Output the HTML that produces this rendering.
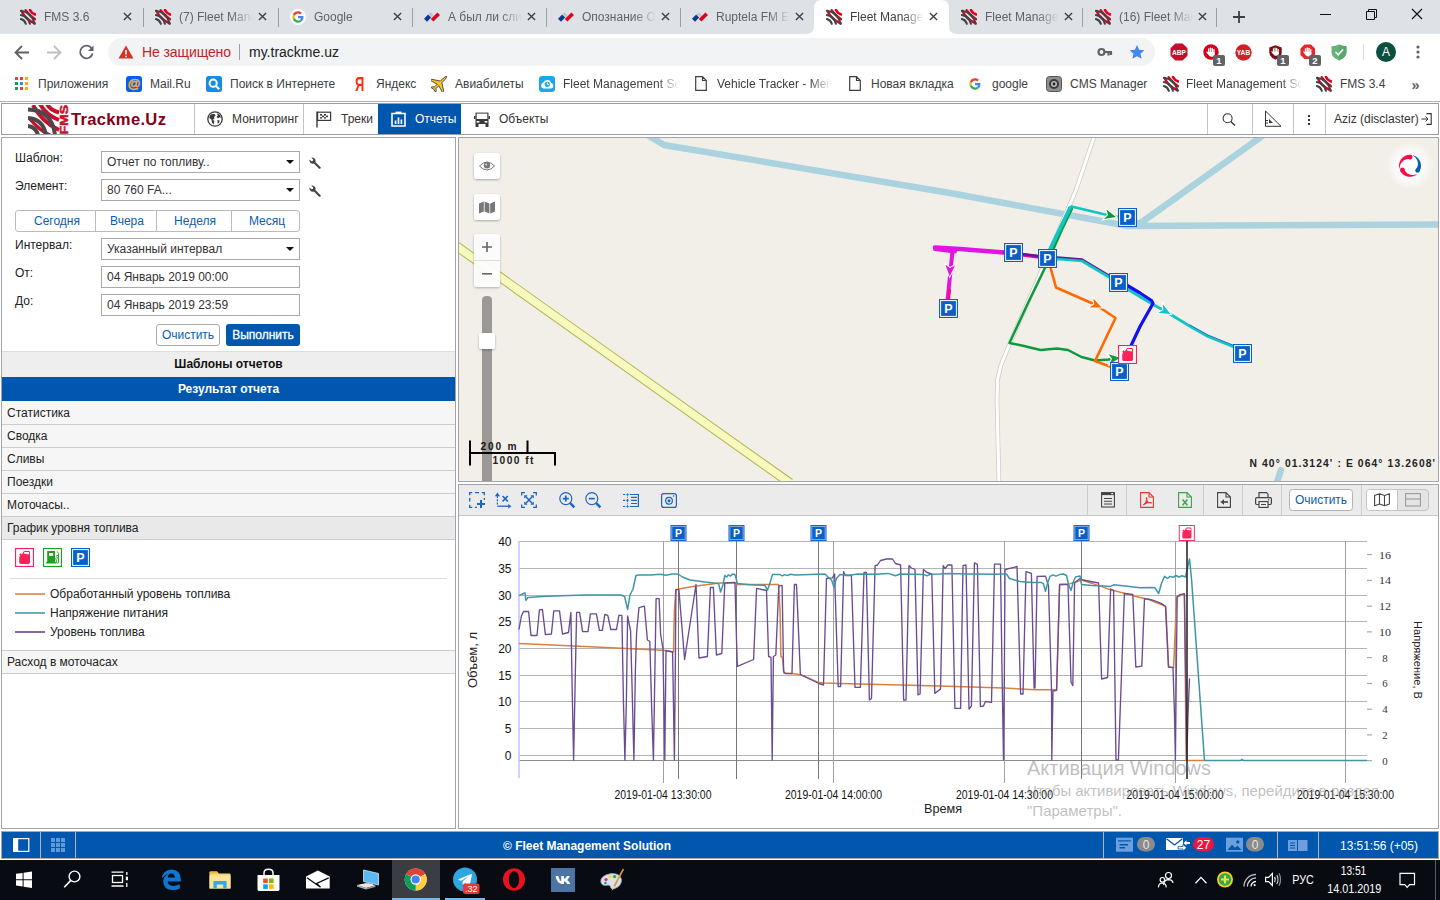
<!DOCTYPE html>
<html><head><meta charset="utf-8"><title>Fleet Management</title>
<style>
*{box-sizing:border-box;margin:0;padding:0}
html,body{width:1440px;height:900px;overflow:hidden;background:#fff;font-family:"Liberation Sans",sans-serif;font-size:12px;color:#222}
.abs{position:absolute}
#tabbar{position:absolute;left:0;top:0;width:1440px;height:34px;background:#dee1e6}
#toolbar{position:absolute;left:0;top:34px;width:1440px;height:36px;background:#fff}
#bookmarks{position:absolute;left:0;top:70px;width:1440px;height:32px;background:#fff;border-bottom:1px solid #b4b2b4}
.tab{position:absolute;top:0;height:34px;font-size:12.5px;color:#5f6368;white-space:nowrap}
.tab .t{position:absolute;left:36px;top:9px;width:76px;overflow:hidden;-webkit-mask-image:linear-gradient(90deg,#000 75%,transparent);}
.tab .x{position:absolute;left:114px;top:11px;width:11px;height:11px}
.tab .ico{position:absolute;left:10px;top:8px;width:18px;height:18px}
.tsep{position:absolute;top:8px;width:1px;height:19px;background:#9aa0a6}
.bm{position:absolute;top:7px;height:18px;font-size:12px;color:#3c4043;white-space:nowrap}
#app{position:absolute;left:0;top:101px;width:1440px;height:759px}
#hdr{position:absolute;left:1px;top:2px;width:1438px;height:32px;border:1px solid #9c9ea5;background:#fff}
.nav{position:absolute;top:0;height:30px;border-left:1px solid #c4c4c4;font-size:12.5px;color:#333;white-space:nowrap}
#left{position:absolute;left:1px;top:36px;width:455px;height:692px;border:1px solid #a2a4a9;background:#fff}
#map{position:absolute;left:458px;top:36px;width:981px;height:345px;border:1px solid #a2a4a9;background:#f2efe9;overflow:hidden}
#chart{position:absolute;left:458px;top:383px;width:981px;height:345px;border:1px solid #a2a4a9;background:#fff;overflow:hidden}
#foot{position:absolute;left:1px;top:730px;width:1438px;height:28px;background:#0057ad;border:1px solid #a8a8a8}
#taskbar{position:absolute;left:0;top:860px;width:1440px;height:40px;background:#080b11}
.tt{position:absolute;top:9px;width:77px;height:16px;line-height:16px;overflow:hidden;white-space:nowrap;font-size:12px;-webkit-mask-image:linear-gradient(90deg,#000 68%,transparent 96%)}
</style></head><body>
<div id="tabbar"><svg style="position:absolute;left:806px;top:0" width="152" height="34" viewBox="0 0 152 34"><path d="M0 34 Q8 34 8 26 L8 8 Q8 0 16 0 L135 0 Q143 0 143 8 L143 26 Q143 34 151 34 Z" fill="#fff"/></svg>
<svg viewBox="0 0 16 16" width="16" height="16" style="position:absolute;left:20px;top:9px"><g fill="none" stroke-linecap="round"><path d="M10 1 Q11.6 4.4 15.2 5.4" stroke="#e2001a" stroke-width="2.6"/><path d="M5.6 1.2 Q9.4 7 15.2 10.2" stroke="#e2001a" stroke-width="2.3"/><path d="M1.6 2 Q4.6 9.6 14.6 14.4" stroke="#e2001a" stroke-width="2.3"/><path d="M0.9 1.8 Q12 3.2 14.6 14.8" stroke="#3d4548" stroke-width="2.1"/><path d="M0.9 6 Q8 7.2 9.9 14.8" stroke="#3d4548" stroke-width="2.1"/><path d="M0.9 10.1 Q4.6 11 5.8 14.8" stroke="#3d4548" stroke-width="2.1"/></g></svg>
<div class="tt" style="left:44px;color:#5f6368">FMS 3.6</div>
<svg viewBox="0 0 10 10" width="9" height="9" style="position:absolute;left:123px;top:12px"><path d="M1 1 L9 9 M9 1 L1 9" stroke="#3c4043" stroke-width="1.5" fill="none"/></svg>
<svg viewBox="0 0 16 16" width="16" height="16" style="position:absolute;left:155px;top:9px"><g fill="none" stroke-linecap="round"><path d="M10 1 Q11.6 4.4 15.2 5.4" stroke="#e2001a" stroke-width="2.6"/><path d="M5.6 1.2 Q9.4 7 15.2 10.2" stroke="#e2001a" stroke-width="2.3"/><path d="M1.6 2 Q4.6 9.6 14.6 14.4" stroke="#e2001a" stroke-width="2.3"/><path d="M0.9 1.8 Q12 3.2 14.6 14.8" stroke="#3d4548" stroke-width="2.1"/><path d="M0.9 6 Q8 7.2 9.9 14.8" stroke="#3d4548" stroke-width="2.1"/><path d="M0.9 10.1 Q4.6 11 5.8 14.8" stroke="#3d4548" stroke-width="2.1"/></g></svg>
<div class="tt" style="left:179px;color:#5f6368">(7) Fleet Management</div>
<svg viewBox="0 0 10 10" width="9" height="9" style="position:absolute;left:258px;top:12px"><path d="M1 1 L9 9 M9 1 L1 9" stroke="#3c4043" stroke-width="1.5" fill="none"/></svg>
<svg viewBox="0 0 48 48" width="16" height="16" style="position:absolute;left:290px;top:9px"><circle cx="24" cy="24" r="24" fill="#fff"/><g transform="translate(7 7) scale(0.71)"><path fill="#EA4335" d="M24 9.5c3.54 0 6.71 1.22 9.21 3.6l6.85-6.85C35.9 2.38 30.47 0 24 0 14.62 0 6.51 5.38 2.56 13.22l7.98 6.19C12.43 13.72 17.74 9.5 24 9.5z"/><path fill="#4285F4" d="M46.98 24.55c0-1.57-.15-3.09-.38-4.55H24v9.02h12.94c-.58 2.96-2.26 5.48-4.78 7.18l7.73 6c4.51-4.18 7.09-10.36 7.09-17.65z"/><path fill="#FBBC05" d="M10.53 28.59c-.48-1.45-.76-2.99-.76-4.59s.27-3.14.76-4.59l-7.98-6.19C.92 16.46 0 20.12 0 24c0 3.88.92 7.54 2.56 10.78l7.97-6.19z"/><path fill="#34A853" d="M24 48c6.48 0 11.93-2.13 15.89-5.81l-7.73-6c-2.15 1.45-4.92 2.3-8.16 2.3-6.26 0-11.57-4.22-13.47-9.91l-7.98 6.19C6.51 42.62 14.62 48 24 48z"/></g></svg>
<div class="tt" style="left:314px;color:#5f6368">Google</div>
<svg viewBox="0 0 10 10" width="9" height="9" style="position:absolute;left:393px;top:12px"><path d="M1 1 L9 9 M9 1 L1 9" stroke="#3c4043" stroke-width="1.5" fill="none"/></svg>
<svg viewBox="0 0 16 16" width="16" height="16" style="position:absolute;left:424px;top:9px"><path d="M0 9.8 L4.2 5.6 L7.2 8.6 L3 12.8Z" fill="#0b3b8c"/><path d="M4.2 5.6 L6.6 3.2 L9.6 6.2 L7.2 8.6Z" fill="#b9c5d8"/><path d="M6.8 10 L13.4 3.4 L16 6 L9.4 12.6Z" fill="#e2001a"/></svg>
<div class="tt" style="left:448px;color:#5f6368">А был ли слив</div>
<svg viewBox="0 0 10 10" width="9" height="9" style="position:absolute;left:527px;top:12px"><path d="M1 1 L9 9 M9 1 L1 9" stroke="#3c4043" stroke-width="1.5" fill="none"/></svg>
<svg viewBox="0 0 16 16" width="16" height="16" style="position:absolute;left:558px;top:9px"><path d="M0 9.8 L4.2 5.6 L7.2 8.6 L3 12.8Z" fill="#0b3b8c"/><path d="M4.2 5.6 L6.6 3.2 L9.6 6.2 L7.2 8.6Z" fill="#b9c5d8"/><path d="M6.8 10 L13.4 3.4 L16 6 L9.4 12.6Z" fill="#e2001a"/></svg>
<div class="tt" style="left:582px;color:#5f6368">Опознание О</div>
<svg viewBox="0 0 10 10" width="9" height="9" style="position:absolute;left:661px;top:12px"><path d="M1 1 L9 9 M9 1 L1 9" stroke="#3c4043" stroke-width="1.5" fill="none"/></svg>
<svg viewBox="0 0 16 16" width="16" height="16" style="position:absolute;left:692px;top:9px"><path d="M0 9.8 L4.2 5.6 L7.2 8.6 L3 12.8Z" fill="#0b3b8c"/><path d="M4.2 5.6 L6.6 3.2 L9.6 6.2 L7.2 8.6Z" fill="#b9c5d8"/><path d="M6.8 10 L13.4 3.4 L16 6 L9.4 12.6Z" fill="#e2001a"/></svg>
<div class="tt" style="left:716px;color:#5f6368">Ruptela FM Express</div>
<svg viewBox="0 0 10 10" width="9" height="9" style="position:absolute;left:795px;top:12px"><path d="M1 1 L9 9 M9 1 L1 9" stroke="#3c4043" stroke-width="1.5" fill="none"/></svg>
<svg viewBox="0 0 16 16" width="16" height="16" style="position:absolute;left:826px;top:9px"><g fill="none" stroke-linecap="round"><path d="M10 1 Q11.6 4.4 15.2 5.4" stroke="#e2001a" stroke-width="2.6"/><path d="M5.6 1.2 Q9.4 7 15.2 10.2" stroke="#e2001a" stroke-width="2.3"/><path d="M1.6 2 Q4.6 9.6 14.6 14.4" stroke="#e2001a" stroke-width="2.3"/><path d="M0.9 1.8 Q12 3.2 14.6 14.8" stroke="#3d4548" stroke-width="2.1"/><path d="M0.9 6 Q8 7.2 9.9 14.8" stroke="#3d4548" stroke-width="2.1"/><path d="M0.9 10.1 Q4.6 11 5.8 14.8" stroke="#3d4548" stroke-width="2.1"/></g></svg>
<div class="tt" style="left:850px;color:#3c4043">Fleet Management</div>
<svg viewBox="0 0 10 10" width="9" height="9" style="position:absolute;left:929px;top:12px"><path d="M1 1 L9 9 M9 1 L1 9" stroke="#3c4043" stroke-width="1.5" fill="none"/></svg>
<svg viewBox="0 0 16 16" width="16" height="16" style="position:absolute;left:961px;top:9px"><g fill="none" stroke-linecap="round"><path d="M10 1 Q11.6 4.4 15.2 5.4" stroke="#e2001a" stroke-width="2.6"/><path d="M5.6 1.2 Q9.4 7 15.2 10.2" stroke="#e2001a" stroke-width="2.3"/><path d="M1.6 2 Q4.6 9.6 14.6 14.4" stroke="#e2001a" stroke-width="2.3"/><path d="M0.9 1.8 Q12 3.2 14.6 14.8" stroke="#3d4548" stroke-width="2.1"/><path d="M0.9 6 Q8 7.2 9.9 14.8" stroke="#3d4548" stroke-width="2.1"/><path d="M0.9 10.1 Q4.6 11 5.8 14.8" stroke="#3d4548" stroke-width="2.1"/></g></svg>
<div class="tt" style="left:985px;color:#5f6368">Fleet Management</div>
<svg viewBox="0 0 10 10" width="9" height="9" style="position:absolute;left:1064px;top:12px"><path d="M1 1 L9 9 M9 1 L1 9" stroke="#3c4043" stroke-width="1.5" fill="none"/></svg>
<svg viewBox="0 0 16 16" width="16" height="16" style="position:absolute;left:1095px;top:9px"><g fill="none" stroke-linecap="round"><path d="M10 1 Q11.6 4.4 15.2 5.4" stroke="#e2001a" stroke-width="2.6"/><path d="M5.6 1.2 Q9.4 7 15.2 10.2" stroke="#e2001a" stroke-width="2.3"/><path d="M1.6 2 Q4.6 9.6 14.6 14.4" stroke="#e2001a" stroke-width="2.3"/><path d="M0.9 1.8 Q12 3.2 14.6 14.8" stroke="#3d4548" stroke-width="2.1"/><path d="M0.9 6 Q8 7.2 9.9 14.8" stroke="#3d4548" stroke-width="2.1"/><path d="M0.9 10.1 Q4.6 11 5.8 14.8" stroke="#3d4548" stroke-width="2.1"/></g></svg>
<div class="tt" style="left:1119px;color:#5f6368">(16) Fleet Management</div>
<svg viewBox="0 0 10 10" width="9" height="9" style="position:absolute;left:1198px;top:12px"><path d="M1 1 L9 9 M9 1 L1 9" stroke="#3c4043" stroke-width="1.5" fill="none"/></svg>
<div class="tsep" style="left:143px"></div>
<div class="tsep" style="left:278px"></div>
<div class="tsep" style="left:412px"></div>
<div class="tsep" style="left:546px"></div>
<div class="tsep" style="left:680px"></div>
<div class="tsep" style="left:1082px"></div>
<div class="tsep" style="left:1216px"></div>
<svg style="position:absolute;left:1232px;top:10px" width="14" height="14" viewBox="0 0 14 14"><path d="M7 1 V13 M1 7 H13" stroke="#3c4043" stroke-width="1.8" fill="none"/></svg>
<svg style="position:absolute;left:1300px;top:0" width="140" height="30" viewBox="0 0 140 30"><g stroke="#111" stroke-width="1" fill="none"><path d="M20 14.5 H31"/><path d="M66.5 11.5 h8 v8 h-8 z M68.5 11.5 v-2 h8 v8 h-2"/><path d="M112 9 L122 19 M122 9 L112 19" stroke-width="1.2"/></g></svg></div>
<div id="toolbar"><svg style="position:absolute;left:0;top:0" width="108" height="36" viewBox="0 0 108 36"><g fill="none" stroke-width="1.8"><path d="M29 18.5 H16 M22 12 L15.5 18.5 L22 25" stroke="#5f6368"/><path d="M47 18.5 H60 M54 12 L60.5 18.5 L54 25" stroke="#bdc1c6"/><path d="M91.5 14.2 A6.3 6.3 0 1 0 92.6 19.5" stroke="#5f6368"/></g><path d="M93.5 11.5 V17 H88 Z" fill="#5f6368"/></svg>
<div style="position:absolute;left:108px;top:4px;width:1047px;height:28px;border-radius:14px;background:#f1f3f4"></div>
<svg style="position:absolute;left:118px;top:11px" width="16" height="14" viewBox="0 0 16 14"><path d="M8 0.5 L15.5 13.5 H0.5 Z" fill="#d93025"/><path d="M8 5 V9.5 M8 10.8 V12.2" stroke="#fff" stroke-width="1.6"/></svg>
<div style="position:absolute;left:142px;top:9px;font-size:14px;line-height:18px;color:#c5221f;white-space:nowrap;letter-spacing:-0.1px">Не защищено</div>
<div style="position:absolute;left:239px;top:10px;width:1px;height:16px;background:#9aa0a6"></div>
<div style="position:absolute;left:249px;top:9px;font-size:14px;line-height:18px;color:#202124;white-space:nowrap">my.trackme.uz</div>
<svg style="position:absolute;left:1097px;top:12px" width="16" height="12" viewBox="0 0 16 12"><circle cx="4.5" cy="6" r="3" fill="none" stroke="#5f6368" stroke-width="2.2"/><path d="M7 6 H15 M11.5 6 V9.5 M14 6 V9" stroke="#5f6368" stroke-width="2.2" fill="none"/></svg>
<svg style="position:absolute;left:1129px;top:10px" width="16" height="16" viewBox="0 0 24 24"><path d="M12 1.5 L15.2 8.6 L23 9.4 L17.2 14.6 L18.9 22.3 L12 18.3 L5.1 22.3 L6.8 14.6 L1 9.4 L8.8 8.6 Z" fill="#4285f4"/></svg>
<svg style="position:absolute;left:1170px;top:9px" width="18" height="18" viewBox="0 0 18 18"><path d="M5.3 0.5 H12.7 L17.5 5.3 V12.7 L12.7 17.5 H5.3 L0.5 12.7 V5.3 Z" fill="#c70d2c"/><text x="9" y="11.6" font-family="Liberation Sans" font-weight="bold" font-size="6.6" fill="#fff" text-anchor="middle">ABP</text></svg>
<svg style="position:absolute;left:1203px;top:9.5px" width="16" height="16" viewBox="0 0 17 17"><circle cx="8.5" cy="8.5" r="8.2" fill="#d0021b"/><g fill="#fff"><rect x="5.3" y="4.6" width="1.5" height="6" rx="0.75"/><rect x="7.2" y="3.6" width="1.5" height="7" rx="0.75"/><rect x="9.1" y="4" width="1.5" height="7" rx="0.75"/><rect x="11" y="5.4" width="1.4" height="6" rx="0.7"/><path d="M5.3 8.6 H12.4 V10.6 Q12.4 13.6 9.2 13.6 Q6.8 13.6 5.8 11.8 L3.6 8.9 Q3.4 8.2 4.1 8 Q4.7 7.9 5.3 8.9Z"/></g></svg>
<div style="position:absolute;left:1213px;top:20.5px;width:12px;height:11.5px;border-radius:2px;background:#5f6368;color:#fff;font-size:9.5px;font-weight:bold;line-height:11.5px;text-align:center">1</div>
<svg style="position:absolute;left:1234.5px;top:9.5px" width="17" height="17" viewBox="0 0 17 17"><circle cx="8.5" cy="8.5" r="8.2" fill="#cf2228"/><text x="8.5" y="11" font-family="Liberation Sans" font-weight="bold" font-size="6.6" fill="#fff" text-anchor="middle">YAB</text></svg>
<svg style="position:absolute;left:1268.5px;top:10.5px" width="13" height="15" viewBox="0 0 13 15"><path d="M6.5 0.3 L12.7 2.4 V7.4 Q12.7 12 6.5 14.7 Q0.3 12 0.3 7.4 V2.4 Z" fill="#7a0d14"/><g transform="translate(-0.6 -0.6) scale(0.84)"><g fill="#fff"><rect x="5.3" y="4.6" width="1.5" height="6" rx="0.75"/><rect x="7.2" y="3.6" width="1.5" height="7" rx="0.75"/><rect x="9.1" y="4" width="1.5" height="7" rx="0.75"/><rect x="11" y="5.4" width="1.4" height="6" rx="0.7"/><path d="M5.3 8.6 H12.4 V10.6 Q12.4 13.6 9.2 13.6 Q6.8 13.6 5.8 11.8 L3.6 8.9 Q3.4 8.2 4.1 8 Q4.7 7.9 5.3 8.9Z"/></g></g></svg>
<div style="position:absolute;left:1277px;top:20.5px;width:12px;height:11.5px;border-radius:2px;background:#5f6368;color:#fff;font-size:9.5px;font-weight:bold;line-height:11.5px;text-align:center">1</div>
<svg style="position:absolute;left:1299.5px;top:9.5px" width="15.5" height="15.5" viewBox="0 0 17 17"><path d="M5 0.5 H12 L16.5 5 V12 L12 16.5 H5 L0.5 12 V5 Z" fill="#e8252a"/><g fill="#fff"><rect x="5.3" y="4.6" width="1.5" height="6" rx="0.75"/><rect x="7.2" y="3.6" width="1.5" height="7" rx="0.75"/><rect x="9.1" y="4" width="1.5" height="7" rx="0.75"/><rect x="11" y="5.4" width="1.4" height="6" rx="0.7"/><path d="M5.3 8.6 H12.4 V10.6 Q12.4 13.6 9.2 13.6 Q6.8 13.6 5.8 11.8 L3.6 8.9 Q3.4 8.2 4.1 8 Q4.7 7.9 5.3 8.9Z"/></g></svg>
<div style="position:absolute;left:1309px;top:20.5px;width:12px;height:11.5px;border-radius:2px;background:#5f6368;color:#fff;font-size:9.5px;font-weight:bold;line-height:11.5px;text-align:center">2</div>
<svg style="position:absolute;left:1331px;top:9.5px" width="16" height="17" viewBox="0 0 16 17"><path d="M8 0.5 Q11 2.2 15.5 2.2 V8 Q15.5 13.5 8 16.5 Q0.5 13.5 0.5 8 V2.2 Q5 2.2 8 0.5Z" fill="#67b279"/><path d="M8 0.5 Q11 2.2 15.5 2.2 V8 Q15.5 13.5 8 16.5Z" fill="#5aa86c"/><path d="M4.5 8 L7.2 10.8 L12 5.5" stroke="#fff" stroke-width="1.6" fill="none"/></svg>
<div style="position:absolute;left:1363px;top:10px;width:1px;height:16px;background:#dadce0"></div>
<div style="position:absolute;left:1376px;top:8px;width:20px;height:20px;border-radius:10px;background:#0b4f3e;color:#fff;font-size:12px;line-height:20px;text-align:center">A</div>
<svg style="position:absolute;left:1415px;top:10px" width="6" height="16" viewBox="0 0 6 16"><circle cx="3" cy="3" r="1.6" fill="#5f6368"/><circle cx="3" cy="8" r="1.6" fill="#5f6368"/><circle cx="3" cy="13" r="1.6" fill="#5f6368"/></svg></div>
<div id="bookmarks"><svg style="position:absolute;left:15px;top:7px" width="13" height="13" viewBox="0 0 13 13"><rect x="0" y="0" width="3" height="3" fill="#db4437"/><rect x="5" y="0" width="3" height="3" fill="#db4437"/><rect x="10" y="0" width="3" height="3" fill="#f4b400"/><rect x="0" y="5" width="3" height="3" fill="#0f9d58"/><rect x="5" y="5" width="3" height="3" fill="#4285f4"/><rect x="10" y="5" width="3" height="3" fill="#f4b400"/><rect x="0" y="10" width="3" height="3" fill="#0f9d58"/><rect x="5" y="10" width="3" height="3" fill="#db4437"/><rect x="10" y="10" width="3" height="3" fill="#f4b400"/></svg>
<div class="bm" style="left:38px;">Приложения</div>
<div style="position:absolute;left:126px;top:6px;width:16px;height:16px;border-radius:3px;background:#005ff9;color:#ffb020;font-size:13px;font-weight:bold;line-height:15px;text-align:center;-webkit-text-stroke:0.4px #ffb020">@</div>
<div class="bm" style="left:150px;">Mail.Ru</div>
<svg style="position:absolute;left:206px;top:6px" width="16" height="16" viewBox="0 0 16 16"><rect width="16" height="16" rx="2.5" fill="#168de2"/><circle cx="7.2" cy="7.2" r="3.6" fill="none" stroke="#fff" stroke-width="2"/><path d="M9.8 9.8 L13.2 13.2" stroke="#fff" stroke-width="2.2"/></svg>
<div class="bm" style="left:230px;">Поиск в Интернете</div>
<div style="position:absolute;left:354.5px;top:3.5px;font-size:19.5px;line-height:20px;color:#ff2a10;font-weight:bold;transform:scaleX(0.66);transform-origin:left">Я</div>
<div class="bm" style="left:376px;">Яндекс</div>
<svg style="position:absolute;left:431px;top:5px" width="17" height="17" viewBox="0 0 17 17"><g transform="rotate(45 8.5 8.5)"><path d="M8.5 -1.5 Q9.6 -0.8 9.6 2 V6.2 L17 11 V12.8 L9.6 10.6 V14.6 L11.6 16.2 V17.4 L8.5 16.6 L5.4 17.4 V16.2 L7.4 14.6 V10.6 L0 12.8 V11 L7.4 6.2 V2 Q7.4 -0.8 8.5 -1.5Z" fill="#f7c51e" stroke="#33383d" stroke-width="0.8"/></g></svg>
<div class="bm" style="left:455px;">Авиабилеты</div>
<svg style="position:absolute;left:539px;top:6px" width="16" height="16" viewBox="0 0 16 16"><rect width="16" height="16" rx="3" fill="#1ea7e6"/><path d="M4.6 12.6 H11.8 a2.7 2.7 0 0 0 .6-5.3 A4.3 4.3 0 0 0 4.3 6.6 A3.1 3.1 0 0 0 4.6 12.6Z" fill="#fff"/><circle cx="8.3" cy="8.3" r="2.6" fill="#1ea7e6"/><path d="M8.3 6.6 V8.5 H9.8" stroke="#fff" stroke-width="1" fill="none"/></svg>
<div class="bm" style="left:563px;width:116px;overflow:hidden;-webkit-mask-image:linear-gradient(90deg,#000 82%,transparent 100%);">Fleet Management Sc</div>
<svg style="position:absolute;left:695px;top:6px" width="12" height="15" viewBox="0 0 12 15"><path d="M0.7 0.7 H7.5 L11.3 4.5 V14.3 H0.7 Z M7.5 0.7 V4.5 H11.3" fill="#fff" stroke="#3c4043" stroke-width="1.2"/></svg>
<div class="bm" style="left:717px;width:114px;overflow:hidden;-webkit-mask-image:linear-gradient(90deg,#000 82%,transparent 100%);">Vehicle Tracker - Meit</div>
<svg style="position:absolute;left:849px;top:6px" width="12" height="15" viewBox="0 0 12 15"><path d="M0.7 0.7 H7.5 L11.3 4.5 V14.3 H0.7 Z M7.5 0.7 V4.5 H11.3" fill="#fff" stroke="#3c4043" stroke-width="1.2"/></svg>
<div class="bm" style="left:871px;">Новая вкладка</div>
<svg viewBox="0 0 48 48" width="16" height="16" style="position:absolute;left:967px;top:6px"><g transform="translate(7 7) scale(0.71)"><path fill="#EA4335" d="M24 9.5c3.54 0 6.71 1.22 9.21 3.6l6.85-6.85C35.9 2.38 30.47 0 24 0 14.62 0 6.51 5.38 2.56 13.22l7.98 6.19C12.43 13.72 17.74 9.5 24 9.5z"/><path fill="#4285F4" d="M46.98 24.55c0-1.57-.15-3.09-.38-4.55H24v9.02h12.94c-.58 2.96-2.26 5.48-4.78 7.18l7.73 6c4.51-4.18 7.09-10.36 7.09-17.65z"/><path fill="#FBBC05" d="M10.53 28.59c-.48-1.45-.76-2.99-.76-4.59s.27-3.14.76-4.59l-7.98-6.19C.92 16.46 0 20.12 0 24c0 3.88.92 7.54 2.56 10.78l7.97-6.19z"/><path fill="#34A853" d="M24 48c6.48 0 11.93-2.13 15.89-5.81l-7.73-6c-2.15 1.45-4.92 2.3-8.16 2.3-6.26 0-11.57-4.22-13.47-9.91l-7.98 6.19C6.51 42.62 14.62 48 24 48z"/></g></svg>
<div class="bm" style="left:992px;">google</div>
<svg style="position:absolute;left:1046px;top:6px" width="16" height="16" viewBox="0 0 16 16"><rect x="0.5" y="0.5" width="15" height="15" rx="3" fill="#8e8e8e" stroke="#555"/><circle cx="8" cy="8" r="5" fill="#3a3a3a"/><circle cx="8" cy="8" r="3" fill="#bbb"/><circle cx="8" cy="8" r="1.4" fill="#222"/></svg>
<div class="bm" style="left:1070px;">CMS Manager</div>
<svg viewBox="0 0 16 16" width="16" height="16" style="position:absolute;left:1163px;top:6px"><g fill="none" stroke-linecap="round"><path d="M10 1 Q11.6 4.4 15.2 5.4" stroke="#e2001a" stroke-width="2.6"/><path d="M5.6 1.2 Q9.4 7 15.2 10.2" stroke="#e2001a" stroke-width="2.3"/><path d="M1.6 2 Q4.6 9.6 14.6 14.4" stroke="#e2001a" stroke-width="2.3"/><path d="M0.9 1.8 Q12 3.2 14.6 14.8" stroke="#3d4548" stroke-width="2.1"/><path d="M0.9 6 Q8 7.2 9.9 14.8" stroke="#3d4548" stroke-width="2.1"/><path d="M0.9 10.1 Q4.6 11 5.8 14.8" stroke="#3d4548" stroke-width="2.1"/></g></svg>
<div class="bm" style="left:1186px;width:116px;overflow:hidden;-webkit-mask-image:linear-gradient(90deg,#000 82%,transparent 100%);">Fleet Management Sc</div>
<svg viewBox="0 0 16 16" width="16" height="16" style="position:absolute;left:1316px;top:6px"><g fill="none" stroke-linecap="round"><path d="M10 1 Q11.6 4.4 15.2 5.4" stroke="#e2001a" stroke-width="2.6"/><path d="M5.6 1.2 Q9.4 7 15.2 10.2" stroke="#e2001a" stroke-width="2.3"/><path d="M1.6 2 Q4.6 9.6 14.6 14.4" stroke="#e2001a" stroke-width="2.3"/><path d="M0.9 1.8 Q12 3.2 14.6 14.8" stroke="#3d4548" stroke-width="2.1"/><path d="M0.9 6 Q8 7.2 9.9 14.8" stroke="#3d4548" stroke-width="2.1"/><path d="M0.9 10.1 Q4.6 11 5.8 14.8" stroke="#3d4548" stroke-width="2.1"/></g></svg>
<div class="bm" style="left:1340px;">FMS 3.4</div>
<div style="position:absolute;left:1411.5px;top:5px;font-size:14.5px;line-height:20px;color:#5f6368;font-weight:bold">»</div></div>
<div id="app">
<div id="hdr"><svg style="position:absolute;left:26px;top:1px" width="32" height="29" viewBox="0 0 32 29"><g fill="none"><path d="M5 0 Q14 17 31 25" stroke="#c8102e" stroke-width="4"/><path d="M12 -1 Q18 10 31 15" stroke="#c8102e" stroke-width="4"/><path d="M19 -1 Q22 5 31 7.5" stroke="#c8102e" stroke-width="4"/><path d="M2 14 Q12 26 22 30" stroke="#c8102e" stroke-width="3.5"/><path d="M0 4.5 Q24 5 27 30" stroke="#4a4a4c" stroke-width="4"/><path d="M0 13 Q15 14 18 30" stroke="#4a4a4c" stroke-width="4"/><path d="M0 21 Q8 22 10 30" stroke="#4a4a4c" stroke-width="4"/></g></svg>
<svg style="position:absolute;left:57px;top:0px" width="10" height="30" viewBox="0 0 10 30"><text transform="translate(8.6 30.6) rotate(-90) scale(1.22 1)" font-family="Liberation Sans" font-weight="bold" font-size="11.2" fill="#c8102e" stroke="#c8102e" stroke-width="0.5" textLength="24.4" lengthAdjust="spacingAndGlyphs">FMS</text></svg>
<div style="position:absolute;left:69px;top:5.5px;font-size:16.6px;font-weight:bold;color:#86001a;line-height:20px;white-space:nowrap;letter-spacing:0.3px">Trackme.Uz</div>
<div style="position:absolute;left:192px;top:0px;width:1px;height:30px;background:#c4c4c4"></div>
<div style="position:absolute;left:301px;top:0px;width:1px;height:30px;background:#c4c4c4"></div>
<svg style="position:absolute;left:205px;top:7px" width="16" height="16" viewBox="0 0 16 16"><circle cx="8" cy="8" r="7.2" fill="#fff" stroke="#3a3a3a" stroke-width="1.3"/><path d="M3 4.2 Q5 2.5 7.5 3 L8.5 4.5 L7 6 L7.6 7.4 L6 8.6 L7.4 10.4 L6.6 13.6 L5 11.5 L4.4 8.6 L2.2 7 Z M10 2.2 L13 4 L14 7 L12.4 6.2 L11 7.4 L9.6 5.8 L10.8 4.4 Z M10.4 9 L12.6 9.4 L12 12 L10.6 12.6 Z" fill="#3a3a3a"/></svg>
<div style="position:absolute;left:230px;top:7px;font-size:12px;line-height:16px;color:#333;white-space:nowrap">Мониторинг</div>
<svg style="position:absolute;left:314px;top:7px" width="16" height="17" viewBox="0 0 16 17"><path d="M1 0.5 V16.5" stroke="#3a3a3a" stroke-width="1.4"/><rect x="1.6" y="1.2" width="13" height="8.2" fill="#fff" stroke="#3a3a3a" stroke-width="1.2"/><g fill="#3a3a3a"><rect x="4" y="3" width="2" height="1.6"/><rect x="8" y="3" width="2" height="1.6"/><rect x="6" y="4.6" width="2" height="1.6"/><rect x="10" y="4.6" width="2" height="1.6"/><rect x="4" y="6.2" width="2" height="1.4"/><rect x="8" y="6.2" width="2" height="1.4"/></g></svg>
<div style="position:absolute;left:339px;top:7px;font-size:12px;line-height:16px;color:#333;white-space:nowrap">Треки</div>
<div style="position:absolute;left:376px;top:0px;width:83px;height:30px;background:#0057ad"></div>
<svg style="position:absolute;left:389px;top:7px" width="15" height="16" viewBox="0 0 15 16"><path d="M1 2.5 H14 V15 H1 Z" fill="none" stroke="#fff" stroke-width="1.6"/><path d="M4.5 0.6 H10.5 V3 H4.5Z" fill="#fff"/><path d="M4.6 13 V9.5 M7.5 13 V6.5 M10.4 13 V8.5" stroke="#fff" stroke-width="1.7"/></svg>
<div style="position:absolute;left:413px;top:7px;font-size:12px;line-height:16px;color:#fff;white-space:nowrap">Отчеты</div>
<svg style="position:absolute;left:472px;top:8px" width="16" height="15" viewBox="0 0 16 15"><path d="M1.5 0.6 H14.5 V12 H1.5 Z" fill="#3a3a3a"/><rect x="2.7" y="1.6" width="10.6" height="5.4" fill="#fff"/><rect x="2.6" y="9" width="2.8" height="1.6" fill="#fff"/><rect x="10.6" y="9" width="2.8" height="1.6" fill="#fff"/><rect x="0" y="4" width="1.5" height="3" fill="#3a3a3a"/><rect x="14.5" y="4" width="1.5" height="3" fill="#3a3a3a"/><rect x="1.5" y="12" width="3" height="3" fill="#3a3a3a"/><rect x="11.5" y="12" width="3" height="3" fill="#3a3a3a"/></svg>
<div style="position:absolute;left:497px;top:7px;font-size:12px;line-height:16px;color:#333;white-space:nowrap">Объекты</div>
<div style="position:absolute;left:1205px;top:0px;width:1px;height:30px;background:#c4c4c4"></div>
<div style="position:absolute;left:1250px;top:0px;width:1px;height:30px;background:#c4c4c4"></div>
<div style="position:absolute;left:1291px;top:0px;width:1px;height:30px;background:#c4c4c4"></div>
<div style="position:absolute;left:1323px;top:0px;width:1px;height:30px;background:#c4c4c4"></div>
<svg style="position:absolute;left:1220px;top:9px" width="14" height="13" viewBox="0 0 14 13"><circle cx="5.6" cy="5.3" r="4.5" fill="none" stroke="#333" stroke-width="1.1"/><path d="M8.8 8.4 L13 12.4" stroke="#333" stroke-width="1.4"/></svg>
<svg style="position:absolute;left:1262px;top:6px" width="18" height="17" viewBox="0 0 18 17"><path d="M1.5 1 L17 16.3 H1.5 Z" fill="none" stroke="#333" stroke-width="1"/><path d="M1.5 10.5 H4 M1.5 13 H4" stroke="#333" stroke-width="1"/><path d="M5 9 L9 13 H5 Z" fill="#333"/></svg>
<div style="position:absolute;left:1306px;top:11px;width:2px;height:2px;background:#333"></div>
<div style="position:absolute;left:1306px;top:15px;width:2px;height:2px;background:#333"></div>
<div style="position:absolute;left:1306px;top:19px;width:2px;height:2px;background:#333"></div>
<div style="position:absolute;left:1332px;top:7px;font-size:12px;line-height:16px;color:#333;white-space:nowrap">Aziz (disclaster)</div>
<svg style="position:absolute;left:1419px;top:9px" width="11" height="12" viewBox="0 0 11 12"><path d="M5.5 0.6 H10.2 V11.4 H5.5" fill="none" stroke="#333" stroke-width="1.1"/><path d="M0.5 6 H7 M4.5 3.5 L7 6 L4.5 8.5" fill="none" stroke="#333" stroke-width="1"/></svg></div>
<div id="left"><div style="position:absolute;left:13px;top:13px;font-size:12px;line-height:14px;color:#222">Шаблон:</div>
<div style="position:absolute;left:99px;top:13px;width:199px;height:22px;border:1px solid #a9a9a9;background:#fff;font-size:12px;line-height:20px;color:#333;padding-left:5px;white-space:nowrap">Отчет по топливу..<div style="position:absolute;left:184px;top:8px;width:0;height:0;border-left:4px solid transparent;border-right:4px solid transparent;border-top:4px solid #111"></div></div>
<svg style="position:absolute;left:307px;top:19px" width="12" height="12" viewBox="0 0 12 12"><path d="M11.6 10.2 L6.4 5 Q7 3 5.6 1.5 Q4.2 0.2 2.3 0.6 L4.2 2.5 L3.8 3.9 L2.4 4.3 L0.5 2.4 Q0.1 4.3 1.4 5.7 Q2.9 7.1 4.9 6.5 L10.1 11.7 Q10.9 12.1 11.5 11.5 Q12.1 10.9 11.6 10.2Z" fill="#454545"/></svg>
<div style="position:absolute;left:13px;top:41px;font-size:12px;line-height:14px;color:#222">Элемент:</div>
<div style="position:absolute;left:99px;top:41px;width:199px;height:22px;border:1px solid #a9a9a9;background:#fff;font-size:12px;line-height:20px;color:#333;padding-left:5px;white-space:nowrap">80 760 FA...<div style="position:absolute;left:184px;top:8px;width:0;height:0;border-left:4px solid transparent;border-right:4px solid transparent;border-top:4px solid #111"></div></div>
<svg style="position:absolute;left:307px;top:47px" width="12" height="12" viewBox="0 0 12 12"><path d="M11.6 10.2 L6.4 5 Q7 3 5.6 1.5 Q4.2 0.2 2.3 0.6 L4.2 2.5 L3.8 3.9 L2.4 4.3 L0.5 2.4 Q0.1 4.3 1.4 5.7 Q2.9 7.1 4.9 6.5 L10.1 11.7 Q10.9 12.1 11.5 11.5 Q12.1 10.9 11.6 10.2Z" fill="#454545"/></svg>
<div style="position:absolute;left:13px;top:72px;width:285px;height:22px;border:1px solid #bbb;border-radius:3px;background:#fff"></div>
<div style="position:absolute;left:13px;top:73px;width:80px;height:20px;line-height:20px;text-align:center;font-size:12px;color:#0b5cad;padding-left:4px">Сегодня</div>
<div style="position:absolute;left:93px;top:73px;width:61px;height:20px;line-height:20px;text-align:center;font-size:12px;color:#0b5cad;border-left:1px solid #bbb;padding-left:2px">Вчера</div>
<div style="position:absolute;left:154px;top:73px;width:75px;height:20px;line-height:20px;text-align:center;font-size:12px;color:#0b5cad;border-left:1px solid #bbb;padding-left:2px">Неделя</div>
<div style="position:absolute;left:229px;top:73px;width:69px;height:20px;line-height:20px;text-align:center;font-size:12px;color:#0b5cad;border-left:1px solid #bbb;padding-left:2px">Месяц</div>
<div style="position:absolute;left:13px;top:100px;font-size:12px;line-height:14px;color:#222">Интервал:</div>
<div style="position:absolute;left:99px;top:100px;width:199px;height:22px;border:1px solid #a9a9a9;background:#fff;font-size:12px;line-height:20px;color:#333;padding-left:5px;white-space:nowrap">Указанный интервал<div style="position:absolute;left:184px;top:8px;width:0;height:0;border-left:4px solid transparent;border-right:4px solid transparent;border-top:4px solid #111"></div></div>
<div style="position:absolute;left:13px;top:128px;font-size:12px;line-height:14px;color:#222">От:</div>
<div style="position:absolute;left:99px;top:128px;width:199px;height:22px;border:1px solid #a9a9a9;background:#fff;font-size:12px;line-height:20px;color:#333;padding-left:5px;white-space:nowrap">04 Январь 2019 00:00</div>
<div style="position:absolute;left:13px;top:156px;font-size:12px;line-height:14px;color:#222">До:</div>
<div style="position:absolute;left:99px;top:156px;width:199px;height:22px;border:1px solid #a9a9a9;background:#fff;font-size:12px;line-height:20px;color:#333;padding-left:5px;white-space:nowrap">04 Январь 2019 23:59</div>
<div style="position:absolute;left:154px;top:186px;width:64px;height:22px;border:1px solid #a9a9a9;border-radius:3px;background:#fff;color:#0b5cad;font-size:12px;line-height:20px;text-align:center">Очистить</div>
<div style="position:absolute;left:224px;top:186px;width:74px;height:22px;border-radius:3px;background:#0057ad;color:#fff;font-size:12px;line-height:22px;text-align:center;-webkit-text-stroke:0.3px #fff">Выполнить</div>
<div style="position:absolute;left:0px;top:213px;width:453px;height:26px;background:#eee;border-top:1px solid #ddd;font-weight:bold;font-size:12px;line-height:25px;text-align:center;color:#111">Шаблоны отчетов</div>
<div style="position:absolute;left:0px;top:239px;width:453px;height:24px;background:#0057ad;font-weight:bold;font-size:12px;line-height:24px;text-align:center;color:#fff">Результат отчета</div>
<div style="position:absolute;left:0px;top:263px;width:453px;height:24px;background:#f6f6f6;border-bottom:1px solid #ccc;font-size:12px;line-height:24px;padding-left:5px;color:#222">Статистика</div>
<div style="position:absolute;left:0px;top:287px;width:453px;height:23px;background:#f6f6f6;border-bottom:1px solid #ccc;font-size:12px;line-height:22px;padding-left:5px;color:#222">Сводка</div>
<div style="position:absolute;left:0px;top:310px;width:453px;height:23px;background:#f6f6f6;border-bottom:1px solid #ccc;font-size:12px;line-height:22px;padding-left:5px;color:#222">Сливы</div>
<div style="position:absolute;left:0px;top:333px;width:453px;height:23px;background:#f6f6f6;border-bottom:1px solid #ccc;font-size:12px;line-height:22px;padding-left:5px;color:#222">Поездки</div>
<div style="position:absolute;left:0px;top:356px;width:453px;height:23px;background:#f6f6f6;border-bottom:1px solid #ccc;font-size:12px;line-height:22px;padding-left:5px;color:#222">Моточасы..</div>
<div style="position:absolute;left:0px;top:379px;width:453px;height:23px;background:#e9e9e9;border-bottom:1px solid #ccc;font-size:12px;line-height:22px;padding-left:5px;color:#222">График уровня топлива</div>
<div style="position:absolute;left:0px;top:512px;width:453px;height:24px;background:#f6f6f6;border-bottom:1px solid #ccc;border-top:1px solid #ccc;font-size:12px;line-height:23px;padding-left:5px;color:#222">Расход в моточасах</div>
<svg style="position:absolute;left:13px;top:410px" width="19" height="19" viewBox="0 0 19 19"><rect width="19" height="19" fill="#ff2258"/><rect x="1.1" y="1.1" width="16.8" height="16.8" fill="#fff"/><path d="M4.2 9 L5.2 7.7 L4.2 6.4 L5.5 5.2 L6.8 6.4 L8.6 3.5 Q8.9 3.1 9.6 3.1 H13.8 Q15 3.1 15 4.3 V14.6 Q15 16 13.6 16 H5.6 Q4.2 16 4.2 14.6Z" fill="#ff2258"/><path d="M9.4 4.1 H14 V6.6 L8.8 5.5Z" fill="#fff"/></svg>
<svg style="position:absolute;left:41px;top:410px" width="19" height="19" viewBox="0 0 19 19"><rect width="19" height="19" fill="#1ea021"/><rect x="1.1" y="1.1" width="16.8" height="16.8" fill="#fff"/><path d="M4.2 3.1 H12 V14 H13 V15.6 H3.1 V14 H4.2Z" fill="#1ea021"/><rect x="6" y="5" width="4.1" height="2.8" fill="#fff"/><path d="M12 10.6 Q13.3 10.6 13.3 12 V14 Q13.3 15.3 14.4 15.3 Q15.5 15.3 15.5 14 V5.6 L14.2 3.4" fill="none" stroke="#1ea021" stroke-width="0.9"/><rect x="13.5" y="7" width="2" height="3.6" rx="0.6" fill="#1ea021"/><rect x="14.1" y="8" width="0.8" height="1.5" fill="#fff"/></svg>
<svg style="position:absolute;left:69px;top:410px" width="19" height="19" viewBox="0 0 19 19"><rect width="19" height="19" fill="#0b5fc9"/><rect x="1.1" y="1.1" width="16.8" height="16.8" fill="#fff"/><rect x="2.1" y="2.1" width="14.8" height="14.8" fill="#0b5fc9"/><text x="9.5" y="14" font-family="Liberation Sans" font-weight="bold" font-size="12.5" fill="#fff" text-anchor="middle">P</text></svg>
<div style="position:absolute;left:8px;top:440px;width:437px;height:1px;background:#ddd"></div>
<div style="position:absolute;left:13px;top:455px;width:30px;height:2px;background:#e58a4a;opacity:.85"></div>
<div style="position:absolute;left:48px;top:449px;font-size:12px;line-height:14px;color:#222;white-space:nowrap">Обработанный уровень топлива</div>
<div style="position:absolute;left:13px;top:474px;width:30px;height:2px;background:#4aa3ad;opacity:.85"></div>
<div style="position:absolute;left:48px;top:468px;font-size:12px;line-height:14px;color:#222;white-space:nowrap">Напряжение питания</div>
<div style="position:absolute;left:13px;top:493px;width:30px;height:2px;background:#6d5096;opacity:.85"></div>
<div style="position:absolute;left:48px;top:487px;font-size:12px;line-height:14px;color:#222;white-space:nowrap">Уровень топлива</div></div>
<div id="map"><svg style="position:absolute;left:0;top:0" width="979" height="343" viewBox="0 0 979 343">
<defs><radialGradient id="glow"><stop offset="0.45" stop-color="#fff" stop-opacity="1"/><stop offset="1" stop-color="#fff" stop-opacity="0"/></radialGradient><filter id="sh" x="-20%" y="-20%" width="140%" height="150%"><feDropShadow dx="0" dy="1" stdDeviation="1" flood-color="#000" flood-opacity="0.3"/></filter></defs>
<g fill="none" stroke="#aad3df" stroke-width="6.5" stroke-linejoin="round">
<polyline points="187.0,-4.0 205.0,7.0 491.0,55.0 669.0,88.0 981.0,86.5"/>
<polyline points="669.0,88.0 683.0,84.0 806.0,-4.0"/>
<polyline points="822.0,332.0 817.0,347.0" stroke-linecap="round"/>
</g>
<polyline points="-7.0,105.0 331.0,345.0" fill="none" stroke="#b3b44e" stroke-width="9.6"/>
<polyline points="-7.0,105.0 331.0,345.0" fill="none" stroke="#f7fabf" stroke-width="7.6"/>
<polyline points="636.0,-4.0 617.0,52.0 588.0,120.0 551.0,205.0 542.0,227.0 538.5,242.0 538.0,262.0 540.0,347.0" fill="none" stroke="#cfcdc8" stroke-width="4.6" stroke-linejoin="round"/>
<polyline points="636.0,-4.0 617.0,52.0 588.0,120.0 551.0,205.0 542.0,227.0 538.5,242.0 538.0,262.0 540.0,347.0" fill="none" stroke="#fff" stroke-width="3" stroke-linejoin="round"/>
<polyline points="476.0,109.5 501.0,111.0 545.0,114.5" fill="none" stroke="#e314e3" stroke-width="4.5" stroke-linejoin="round" stroke-linecap="round"/>
<polyline points="476.0,111.0 496.0,113.5" fill="none" stroke="#e314e3" stroke-width="4" stroke-linejoin="round" stroke-linecap="round"/>
<polyline points="545.0,114.5 588.0,120.0" fill="none" stroke="#d010a0" stroke-width="3.5" stroke-linejoin="round" stroke-linecap="round"/>
<polyline points="563.0,116.0 588.0,119.0" fill="none" stroke="#6a10a0" stroke-width="2.5" stroke-linejoin="round" stroke-linecap="round"/>
<polyline points="493.5,113.0 491.0,138.0 488.5,162.0" fill="none" stroke="#e314e3" stroke-width="4" stroke-linejoin="round" stroke-linecap="round"/>
<polyline points="490.5,152.0 489.5,162.0" fill="none" stroke="#f0108a" stroke-width="3" stroke-linejoin="round" stroke-linecap="round"/>
<polyline points="612.8,71.0 602.3,93.0 590.5,120.0 584.0,134.0 569.0,165.0 550.5,205.0 565.0,208.0 581.5,212.0 598.0,210.5 609.0,212.0 622.5,219.0 636.0,222.5 649.5,221.5 659.0,220.0" fill="none" stroke="#0e9a3c" stroke-width="2.5" stroke-linejoin="round" stroke-linecap="round"/>
<polyline points="590.0,124.0 597.0,149.5 637.0,167.0 656.5,180.0 636.0,223.0 651.0,228.5" fill="none" stroke="#ff6a00" stroke-width="2.6" stroke-linejoin="round" stroke-linecap="round"/>
<polyline points="587.0,120.0 611.0,70.0" fill="none" stroke="#12c4c4" stroke-width="3.6" stroke-linejoin="round" stroke-linecap="round"/>
<polyline points="586.0,121.0 610.5,70.0 612.5,68.5 644.0,76.0 659.0,79.0" fill="none" stroke="#12c4c4" stroke-width="2.8" stroke-linejoin="round" stroke-linecap="round"/>
<polyline points="591.0,120.0 598.0,119.5 623.0,121.5 649.0,137.0 659.0,144.0" fill="none" stroke="#5a189a" stroke-width="2.5" stroke-linejoin="round" stroke-linecap="round"/>
<polyline points="591.0,121.5 598.0,121.0 623.0,123.0 649.0,138.5 659.0,145.5 694.0,166.5 706.0,173.0 733.0,189.5 749.0,198.5 775.0,209.0" fill="none" stroke="#12c4c4" stroke-width="2.7" stroke-linejoin="round" stroke-linecap="round"/>
<polyline points="731.0,187.0 749.0,197.0 775.0,207.5" fill="none" stroke="#2a6fd0" stroke-width="1" stroke-linejoin="round" stroke-linecap="round"/>
<polyline points="665.0,145.5 681.0,155.0 692.5,162.5 694.0,165.5 681.0,188.5 670.0,212.0" fill="none" stroke="#1212ee" stroke-width="3.2" stroke-linejoin="round" stroke-linecap="round"/>
<g transform="translate(491.0 132.0) rotate(93) scale(0.82)"><path d="M7.5 0 L-6 -6 L-2.5 0 L-6 6 Z" fill="#e314e3" stroke="#fff" stroke-width="2.6" stroke-linejoin="miter" paint-order="stroke"/></g>
<g transform="translate(651.0 77.5) rotate(14) scale(0.82)"><path d="M7.5 0 L-6 -6 L-2.5 0 L-6 6 Z" fill="#0e9a3c" stroke="#fff" stroke-width="2.6" stroke-linejoin="miter" paint-order="stroke"/></g>
<g transform="translate(637.0 167.0) rotate(24) scale(0.82)"><path d="M7.5 0 L-6 -6 L-2.5 0 L-6 6 Z" fill="#ff6a00" stroke="#fff" stroke-width="2.6" stroke-linejoin="miter" paint-order="stroke"/></g>
<g transform="translate(706.0 173.0) rotate(28) scale(0.82)"><path d="M7.5 0 L-6 -6 L-2.5 0 L-6 6 Z" fill="#12c4c4" stroke="#fff" stroke-width="2.6" stroke-linejoin="miter" paint-order="stroke"/></g>
<g transform="translate(655.0 220.5) rotate(-8) scale(0.82)"><path d="M7.5 0 L-6 -6 L-2.5 0 L-6 6 Z" fill="#0e9a3c" stroke="#fff" stroke-width="2.6" stroke-linejoin="miter" paint-order="stroke"/></g>
<rect x="659" y="70" width="19" height="19" fill="#0b5fc9"/><rect x="660.1" y="71.1" width="16.8" height="16.8" fill="#fff"/><rect x="661.1" y="72.1" width="14.8" height="14.8" fill="#0b5fc9"/><text x="668.5" y="84" font-family="Liberation Sans" font-weight="bold" font-size="12.5" fill="#fff" text-anchor="middle">P</text>
<rect x="545" y="105" width="19" height="19" fill="#0b5fc9"/><rect x="546.1" y="106.1" width="16.8" height="16.8" fill="#fff"/><rect x="547.1" y="107.1" width="14.8" height="14.8" fill="#0b5fc9"/><text x="554.5" y="119" font-family="Liberation Sans" font-weight="bold" font-size="12.5" fill="#fff" text-anchor="middle">P</text>
<rect x="579" y="111" width="19" height="19" fill="#0b5fc9"/><rect x="580.1" y="112.1" width="16.8" height="16.8" fill="#fff"/><rect x="581.1" y="113.1" width="14.8" height="14.8" fill="#0b5fc9"/><text x="588.5" y="125" font-family="Liberation Sans" font-weight="bold" font-size="12.5" fill="#fff" text-anchor="middle">P</text>
<rect x="650" y="135" width="19" height="19" fill="#0b5fc9"/><rect x="651.1" y="136.1" width="16.8" height="16.8" fill="#fff"/><rect x="652.1" y="137.1" width="14.8" height="14.8" fill="#0b5fc9"/><text x="659.5" y="149" font-family="Liberation Sans" font-weight="bold" font-size="12.5" fill="#fff" text-anchor="middle">P</text>
<rect x="480" y="161" width="19" height="19" fill="#0b5fc9"/><rect x="481.1" y="162.1" width="16.8" height="16.8" fill="#fff"/><rect x="482.1" y="163.1" width="14.8" height="14.8" fill="#0b5fc9"/><text x="489.5" y="175" font-family="Liberation Sans" font-weight="bold" font-size="12.5" fill="#fff" text-anchor="middle">P</text>
<rect x="774" y="206" width="19" height="19" fill="#0b5fc9"/><rect x="775.1" y="207.1" width="16.8" height="16.8" fill="#fff"/><rect x="776.1" y="208.1" width="14.8" height="14.8" fill="#0b5fc9"/><text x="783.5" y="220" font-family="Liberation Sans" font-weight="bold" font-size="12.5" fill="#fff" text-anchor="middle">P</text>
<rect x="651" y="224" width="19" height="19" fill="#0b5fc9"/><rect x="652.1" y="225.1" width="16.8" height="16.8" fill="#fff"/><rect x="653.1" y="226.1" width="14.8" height="14.8" fill="#0b5fc9"/><text x="660.5" y="238" font-family="Liberation Sans" font-weight="bold" font-size="12.5" fill="#fff" text-anchor="middle">P</text>
<g transform="translate(659 207)"><rect width="19" height="19" fill="#ff2258"/><rect x="1.1" y="1.1" width="16.8" height="16.8" fill="#fff"/><path d="M4.2 9 L5.2 7.7 L4.2 6.4 L5.5 5.2 L6.8 6.4 L8.6 3.5 Q8.9 3.1 9.6 3.1 H13.8 Q15 3.1 15 4.3 V14.6 Q15 16 13.6 16 H5.6 Q4.2 16 4.2 14.6Z" fill="#ff2258"/><path d="M9.4 4.1 H14 V6.6 L8.8 5.5Z" fill="#fff"/></g>
<g stroke="#000" stroke-width="2" fill="none"><path d="M11 302.5 V327.5 M10 315 H97 M68.5 302.5 V315 M96 315 V327.5"/></g>
<text x="39.5" y="312.3" font-family="Liberation Sans" font-weight="bold" font-size="10.2" fill="#222" text-anchor="middle" textLength="36" lengthAdjust="spacing">200 m</text>
<text x="54" y="326.3" font-family="Liberation Sans" font-weight="bold" font-size="10.2" fill="#222" text-anchor="middle" textLength="41" lengthAdjust="spacing">1000 ft</text>
<path d="M23 347 V162 Q23 158 28 158 Q33 158 33 162 V347Z" fill="rgba(0,0,0,0.36)"/>
<rect x="20" y="195" width="16" height="16" rx="2" fill="#fff" filter="url(#sh)"/>
<rect x="15" y="15" width="26" height="26" rx="3" fill="#fff" filter="url(#sh)"/>
<rect x="15" y="56" width="26" height="26" rx="3" fill="#fff" filter="url(#sh)"/>
<rect x="15" y="96" width="26" height="53" rx="3" fill="rgba(255,255,255,0.92)" filter="url(#sh)"/>
<path d="M15 122.5 H41" stroke="#ddd" stroke-width="1"/>
<path d="M20.5 28 Q28 20 35.5 28 Q28 36 20.5 28Z" fill="none" stroke="#777" stroke-width="1"/><circle cx="28" cy="27.2" r="3.2" fill="#777"/><circle cx="27.2" cy="26.4" r="1" fill="#ddd"/>
<g fill="#777"><path d="M20 65.5 L24.8 63.5 V73.5 L20 75.5Z"/><path d="M25.6 63.5 L30.4 65.5 V75.5 L25.6 73.5Z"/><path d="M31.2 65.5 L36 63.5 V73.5 L31.2 75.5Z"/></g>
<path d="M23 109 H33 M28 104 V114" stroke="#666" stroke-width="1.6"/>
<path d="M23 135.8 H33" stroke="#666" stroke-width="1.6"/>
<circle cx="951" cy="27.80000000000001" r="24" fill="url(#glow)"/>
<path d="M940.48 31.02 L940.26 30.17 L940.10 29.32 L940.02 28.45 L940.00 27.58 L940.05 26.71 L940.18 25.84 L940.36 24.99 L940.62 24.16 L940.94 23.35 L941.33 22.57 L941.77 21.82 L942.27 21.10 L942.83 20.43 L943.44 19.81 L944.10 19.24 L944.80 18.72 L945.53 18.25 L946.31 17.85 L947.11 17.51 L947.94 17.23 L948.78 17.03 L949.64 16.88 L950.51 16.81 L951.38 16.81 L951.22 21.40 L950.71 21.25 L950.17 21.14 L949.62 21.07 L949.04 21.05 L948.46 21.08 L947.87 21.16 L947.27 21.28 L946.67 21.46 L946.08 21.70 L945.49 21.98 L944.92 22.32 L944.37 22.71 L943.84 23.16 L943.33 23.65 L942.86 24.20 L942.42 24.79 L942.02 25.43 L941.67 26.11 L941.36 26.84 L941.10 27.60 L940.89 28.40 L940.73 29.23 L940.61 30.09 L940.48 31.02Z" fill="#ff0a47"/><circle cx="951.30" cy="19.11" r="2.30" fill="#ff0a47"/>
<path d="M958.36 35.97 L957.72 36.51 L957.04 36.99 L956.33 37.42 L955.59 37.80 L954.82 38.11 L954.03 38.37 L953.22 38.57 L952.40 38.71 L951.58 38.78 L950.74 38.80 L949.91 38.75 L949.09 38.63 L948.28 38.46 L947.48 38.22 L946.70 37.93 L945.95 37.57 L945.23 37.16 L944.53 36.70 L943.88 36.19 L943.27 35.62 L942.70 35.02 L942.18 34.37 L941.71 33.68 L941.29 32.96 L945.35 30.80 L945.46 31.31 L945.62 31.81 L945.82 32.30 L946.06 32.80 L946.35 33.28 L946.68 33.74 L947.06 34.19 L947.48 34.62 L947.94 35.02 L948.44 35.39 L948.97 35.73 L949.55 36.03 L950.16 36.29 L950.80 36.51 L951.47 36.69 L952.16 36.82 L952.88 36.89 L953.61 36.92 L954.37 36.88 L955.13 36.80 L955.91 36.66 L956.70 36.46 L957.50 36.22 L958.36 35.97Z" fill="#ff0a47"/><circle cx="943.32" cy="31.88" r="2.30" fill="#ff0a47"/>
<path d="M953.29 17.04 L954.14 17.26 L954.97 17.54 L955.78 17.89 L956.56 18.31 L957.30 18.78 L958.00 19.31 L958.65 19.90 L959.26 20.54 L959.81 21.22 L960.31 21.94 L960.75 22.71 L961.13 23.50 L961.44 24.32 L961.68 25.17 L961.86 26.03 L961.96 26.91 L962.00 27.78 L961.97 28.66 L961.86 29.54 L961.69 30.40 L961.45 31.24 L961.14 32.07 L960.76 32.87 L960.33 33.63 L956.60 31.30 L956.99 30.91 L957.36 30.48 L957.69 30.01 L957.99 29.50 L958.26 28.96 L958.48 28.39 L958.66 27.79 L958.79 27.16 L958.88 26.52 L958.91 25.85 L958.88 25.18 L958.80 24.49 L958.66 23.80 L958.46 23.11 L958.21 22.42 L957.89 21.74 L957.51 21.08 L957.07 20.43 L956.58 19.81 L956.03 19.21 L955.42 18.64 L954.75 18.10 L954.04 17.59 L953.29 17.04Z" fill="#0b5fb3"/><circle cx="958.46" cy="32.46" r="2.20" fill="#0b5fb3"/>
<text x="976" y="329" font-family="Liberation Sans" font-weight="bold" font-size="10.3" fill="#222" text-anchor="end" textLength="185.5" lengthAdjust="spacing" xml:space="preserve">N 40° 01.3124' : E 064° 13.2608'</text>
</svg></div>
<div id="chart"><div style="position:absolute;left:0;top:0;width:979px;height:31px;background:#ebebeb;border-bottom:1px solid #c8c8c8"></div>
<svg style="position:absolute;left:0;top:0" width="979" height="343" viewBox="0 0 979 343">
<g transform="translate(10 7)" fill="none" stroke="#1a66c2"><path d="M0.7 3.2 V0.7 H3.2 M6 0.7 H10 M12.8 0.7 H15.3 V3.2 M0.7 6 V9.6 M15.3 6 V8 M0.7 12.8 V15.3 H3.2 M6 15.3 H8" stroke-width="1.3"/><path d="M12 8 V16 M8 12 H16" stroke-width="2"/></g>
<g transform="translate(36 7)" fill="none" stroke="#1a66c2"><path d="M2.4 4 V13.4" stroke-width="1.2" stroke-dasharray="2 1.2"/><path d="M2.4 14.2 H13.5" stroke-width="1.3"/><path d="M-0.2 4.2 L2.4 0.4 L5 4.2Z M13.2 12 L16.4 14.2 L13.2 16.4Z" fill="#1a66c2" stroke="none"/><path d="M7.6 4 L12.8 9.4 M12.8 4 L7.6 9.4" stroke-width="1.6"/></g>
<g transform="translate(62 7)" fill="none" stroke="#1a66c2" stroke-width="1.3"><path d="M0.7 3.6 V0.7 H4 M12 0.7 H15.3 V3.6 M15.3 12.4 V15.3 H12 M4 15.3 H0.7 V12.4"/><path d="M4.6 4.6 L11.4 11.4 M11.4 4.6 L4.6 11.4" stroke-width="1.4"/><path d="M3.2 3.2 H6.6 L3.2 6.6Z M12.8 3.2 V6.6 L9.4 3.2Z M12.8 12.8 H9.4 L12.8 9.4Z M3.2 12.8 V9.4 L6.6 12.8Z" fill="#1a66c2" stroke="none"/></g>
<g transform="translate(100 7)" fill="none" stroke="#1a66c2"><circle cx="6.8" cy="6.6" r="6" stroke-width="1.2"/><path d="M3.8 6.6 H9.8 M6.8 3.6 V9.6" stroke-width="1.7"/><path d="M11.2 11.2 L15.4 15.4" stroke-width="2.5"/></g>
<g transform="translate(126 7)" fill="none" stroke="#1a66c2"><circle cx="6.8" cy="6.6" r="6" stroke-width="1.2"/><path d="M3.8 6.6 H9.8" stroke-width="1.7"/><path d="M11.2 11.2 L15.4 15.4" stroke-width="2.5"/></g>
<g transform="translate(164 8.399999999999977)" fill="none" stroke="#1a66c2" stroke-width="1.2"><path d="M6.8 1.1 H15.4 V13.1 H6.8"/><path d="M8 4 H14 M8 7 H14 M8 10.1 H14"/><path d="M0 1.1 H2.2 M0 7 H2.2 M0 13.1 H2.2"/><path d="M4.5 1.1 V13.1" stroke-width="0.9" stroke-dasharray="1 1.2"/><circle cx="4.5" cy="1.1" r="1.1" fill="#1a66c2" stroke="none"/><circle cx="4.5" cy="7" r="1.1" fill="#1a66c2" stroke="none"/><circle cx="4.5" cy="13.1" r="1.1" fill="#1a66c2" stroke="none"/></g>
<g transform="translate(202 8)" fill="none" stroke="#1a66c2" stroke-width="1.2"><rect x="0.6" y="0.6" width="14.8" height="13.8" rx="2.2"/><circle cx="8" cy="7.8" r="3.4"/><circle cx="8" cy="7.8" r="1.5" fill="#1a66c2" stroke="none"/><circle cx="12.6" cy="3" r="0.8" fill="#1a66c2" stroke="none"/></g>
<path d="M628.5 0 V31" stroke="#ccc" stroke-width="1"/>
<path d="M667.5 0 V31" stroke="#ccc" stroke-width="1"/>
<path d="M744.5 0 V31" stroke="#ccc" stroke-width="1"/>
<path d="M783.5 0 V31" stroke="#ccc" stroke-width="1"/>
<path d="M822.5 0 V31" stroke="#ccc" stroke-width="1"/>
<path d="M902.5 0 V31" stroke="#ccc" stroke-width="1"/>
<g transform="translate(642 7)" fill="none" stroke="#444" stroke-width="1.1"><rect x="0.6" y="0.6" width="12.8" height="14.4"/><path d="M0.6 1.8 H13.4" stroke-width="2.6"/><rect x="10.3" y="1" width="1.8" height="1.2" fill="#fff" stroke="none"/><path d="M3 6.5 H11 M3 9.2 H11 M3 12 H11"/></g>
<g transform="translate(681 7)" fill="none" stroke="#e5392d" stroke-width="1.1"><path d="M0.6 0.6 H9 L13.4 5 V15.4 H0.6Z M9 0.6 V5 H13.4"/><path d="M3.2 13 Q6 11 7 6.8 Q7.2 5.4 6.4 5.6 Q5.8 6 6.6 8 Q8 11 11.2 11.2 Q12 11 11.2 10.4 Q8 10 3.2 13Z" stroke-width="0.9" fill="#e5392d"/></g>
<g transform="translate(719 7)" fill="none" stroke="#43a047" stroke-width="1.1"><path d="M0.6 0.6 H9 L13.4 5 V15.4 H0.6Z M9 0.6 V5 H13.4"/><path d="M4.6 7.6 L9.4 13.2 M9.4 7.6 L4.6 13.2" stroke-width="1.5"/></g>
<g transform="translate(758 7)" fill="none" stroke="#444" stroke-width="1.1"><path d="M0.6 0.6 H9 L13.4 5 V15.4 H0.6Z M9 0.6 V5 H13.4"/><path d="M11 10 H5.5" stroke-width="1.6"/><path d="M3.4 10 L7 7.2 V12.8Z" fill="#444" stroke="none"/></g>
<g transform="translate(796 7)" fill="none" stroke="#444" stroke-width="1.2"><path d="M4 5.5 V0.6 H11.5 L13 2.2 V5.5"/><path d="M4 12.5 H1.8 Q0.6 12.5 0.6 11.3 V6.8 Q0.6 5.6 1.8 5.6 H15.2 Q16.4 5.6 16.4 6.8 V11.3 Q16.4 12.5 15.2 12.5 H13"/><rect x="4" y="9.6" width="9" height="5.8" fill="#fff"/><path d="M6 12.5 H11"/><circle cx="13.6" cy="7.8" r="0.7" fill="#444" stroke="none"/></g>
<rect x="830.5" y="4.5" width="63" height="21" rx="3" fill="#fff" stroke="#b4b4b4"/>
<text x="862" y="19.30000000000001" font-family="Liberation Sans" font-size="12" fill="#0b5cad" text-anchor="middle">Очистить</text>
<rect x="907.5" y="4.5" width="62" height="21" rx="3.5" fill="#e4e4e4" stroke="#c4c4c4"/>
<path d="M938.5 5 V25 H911 Q908 25 908 22 V8 Q908 5 911 5Z" fill="#fff"/>
<path d="M938.5 4.5 V25.5" stroke="#c4c4c4"/>
<g transform="translate(915 8)" fill="none" stroke="#444" stroke-width="1.1" stroke-linejoin="round"><path d="M0.6 2.5 L5.5 0.8 L10.5 2.5 L15.4 0.8 V11 L10.5 12.8 L5.5 11 L0.6 12.8Z M5.5 0.8 V11 M10.5 2.5 V12.8"/></g>
<g transform="translate(946 8)" fill="none" stroke="#9a9a9a" stroke-width="1.1"><rect x="0.6" y="0.6" width="14.8" height="12.4"/><path d="M0.6 6 H15.4"/></g>
<path d="M60 56.50 H908" stroke="#b4b4b4" stroke-width="1"/>
<path d="M60 83.50 H908" stroke="#b4b4b4" stroke-width="1"/>
<path d="M60 110.50 H908" stroke="#b4b4b4" stroke-width="1"/>
<path d="M60 136.50 H908" stroke="#b4b4b4" stroke-width="1"/>
<path d="M60 163.50 H908" stroke="#b4b4b4" stroke-width="1"/>
<path d="M60 190.50 H908" stroke="#b4b4b4" stroke-width="1"/>
<path d="M60 216.50 H908" stroke="#b4b4b4" stroke-width="1"/>
<path d="M60 243.50 H908" stroke="#b4b4b4" stroke-width="1"/>
<path d="M60 270.50 H908" stroke="#b4b4b4" stroke-width="1"/>
<path d="M60 275.5 H908" stroke="#8c8c8c" stroke-width="1"/>
<path d="M204.5 56 V298" stroke="#a0a0a0" stroke-width="1"/>
<path d="M374.5 56 V298" stroke="#a0a0a0" stroke-width="1"/>
<path d="M545.5 56 V298" stroke="#a0a0a0" stroke-width="1"/>
<path d="M716.5 56 V298" stroke="#a0a0a0" stroke-width="1"/>
<path d="M886.5 56 V298" stroke="#a0a0a0" stroke-width="1"/>
<path d="M60 56 V293" stroke="#c6c6ff" stroke-width="1.6"/>
<path d="M908 275.70 H913" stroke="#999" stroke-width="1"/>
<text x="926" y="279.70" font-family="Liberation Serif" font-size="11" fill="#333" text-anchor="middle" textLength="5.4" lengthAdjust="spacingAndGlyphs">0</text>
<path d="M908 249.94 H913" stroke="#999" stroke-width="1"/>
<text x="926" y="253.94" font-family="Liberation Serif" font-size="11" fill="#333" text-anchor="middle" textLength="5.4" lengthAdjust="spacingAndGlyphs">2</text>
<path d="M908 224.18 H913" stroke="#999" stroke-width="1"/>
<text x="926" y="228.18" font-family="Liberation Serif" font-size="11" fill="#333" text-anchor="middle" textLength="5.4" lengthAdjust="spacingAndGlyphs">4</text>
<path d="M908 198.42 H913" stroke="#999" stroke-width="1"/>
<text x="926" y="202.42" font-family="Liberation Serif" font-size="11" fill="#333" text-anchor="middle" textLength="5.4" lengthAdjust="spacingAndGlyphs">6</text>
<path d="M908 172.66 H913" stroke="#999" stroke-width="1"/>
<text x="926" y="176.66" font-family="Liberation Serif" font-size="11" fill="#333" text-anchor="middle" textLength="5.4" lengthAdjust="spacingAndGlyphs">8</text>
<path d="M908 146.90 H913" stroke="#999" stroke-width="1"/>
<text x="926" y="150.90" font-family="Liberation Serif" font-size="11" fill="#333" text-anchor="middle" textLength="12" lengthAdjust="spacingAndGlyphs">10</text>
<path d="M908 121.14 H913" stroke="#999" stroke-width="1"/>
<text x="926" y="125.14" font-family="Liberation Serif" font-size="11" fill="#333" text-anchor="middle" textLength="12" lengthAdjust="spacingAndGlyphs">12</text>
<path d="M908 95.38 H913" stroke="#999" stroke-width="1"/>
<text x="926" y="99.38" font-family="Liberation Serif" font-size="11" fill="#333" text-anchor="middle" textLength="12" lengthAdjust="spacingAndGlyphs">14</text>
<path d="M908 69.62 H913" stroke="#999" stroke-width="1"/>
<text x="926" y="73.62" font-family="Liberation Serif" font-size="11" fill="#333" text-anchor="middle" textLength="12" lengthAdjust="spacingAndGlyphs">16</text>
<text x="52.5" y="60.90" font-family="Liberation Sans" font-size="12" fill="#111" text-anchor="end">40</text>
<text x="52.5" y="87.90" font-family="Liberation Sans" font-size="12" fill="#111" text-anchor="end">35</text>
<text x="52.5" y="114.90" font-family="Liberation Sans" font-size="12" fill="#111" text-anchor="end">30</text>
<text x="52.5" y="140.90" font-family="Liberation Sans" font-size="12" fill="#111" text-anchor="end">25</text>
<text x="52.5" y="167.90" font-family="Liberation Sans" font-size="12" fill="#111" text-anchor="end">20</text>
<text x="52.5" y="194.90" font-family="Liberation Sans" font-size="12" fill="#111" text-anchor="end">15</text>
<text x="52.5" y="220.90" font-family="Liberation Sans" font-size="12" fill="#111" text-anchor="end">10</text>
<text x="52.5" y="247.90" font-family="Liberation Sans" font-size="12" fill="#111" text-anchor="end">5</text>
<text x="52.5" y="274.90" font-family="Liberation Sans" font-size="12" fill="#111" text-anchor="end">0</text>
<path d="M219.5 56 V294" stroke="#777" stroke-width="1"/>
<path d="M277.5 56 V294" stroke="#777" stroke-width="1"/>
<path d="M359.5 56 V294" stroke="#777" stroke-width="1"/>
<path d="M622.5 56 V294" stroke="#777" stroke-width="1"/>
<polyline points="60.0,158.6 126.0,161.6 204.0,165.2 214.5,167.0 215.4,125.0 216.9,104.6 237.0,101.0 261.0,98.0 276.0,98.0 278.4,99.5 319.5,99.5 321.0,125.0 321.9,171.5 323.4,172.4 324.9,188.0 333.0,188.6 341.4,189.8 360.0,197.6 364.5,197.9 381.0,198.5 480.9,200.9 544.5,203.0 576.0,204.8 597.6,204.8 600.6,99.5 610.5,98.9 618.0,96.5 622.5,95.0 639.0,100.4 651.0,104.6 666.0,108.5 681.0,112.4 690.9,114.8 694.5,116.6 705.0,120.5 706.8,122.0 709.5,182.0 714.6,182.6 717.6,112.4 725.4,108.8 727.2,275.6 745.5,275.6" fill="none" stroke="#d9803f" stroke-width="1.5" stroke-linejoin="round"/>
<polyline points="60.0,144.5 62.4,131.0 64.5,126.5 69.6,126.5 72.0,150.5 78.0,150.5 80.4,125.0 83.4,124.4 86.4,149.6 92.4,149.0 94.8,125.9 100.5,125.9 103.5,149.0 109.5,147.5 111.9,127.4 113.1,200.0 114.6,275.0 116.1,200.0 117.6,127.4 120.6,127.4 123.6,146.6 129.0,146.6 131.4,128.9 137.4,128.9 140.4,145.4 143.4,145.4 145.8,129.5 148.8,130.4 151.8,144.5 157.5,144.5 159.9,130.4 162.9,130.4 164.4,215.0 165.9,275.0 167.4,215.0 168.6,131.0 171.6,146.0 173.4,215.0 174.9,275.0 176.4,185.0 177.6,147.5 180.0,122.6 185.4,121.1 188.4,155.0 190.8,156.5 192.6,221.0 194.4,275.0 195.9,185.0 197.1,113.6 200.1,113.6 201.6,149.0 204.0,164.0 205.8,275.0 207.0,165.5 213.6,167.0 215.4,275.0 216.3,185.0 216.9,104.6 219.9,104.6 225.6,174.5 237.0,99.5 240.0,173.0 248.4,171.5 251.4,102.5 254.4,102.5 257.4,170.0 262.8,168.5 265.8,98.0 265.8,98.0 276.0,97.4 277.5,155.0 278.4,181.4 294.6,174.5 297.6,103.4 307.5,105.5 309.6,171.5 312.0,172.4 313.2,275.0 314.4,171.5 316.8,170.0 319.8,101.0 323.1,100.4 324.6,186.5 326.4,188.6 333.0,188.6 335.4,99.5 337.5,99.5 341.4,189.5 360.0,198.5 364.5,200.0 367.5,93.5 373.5,92.9 375.6,89.0 379.2,201.5 381.6,201.5 384.6,86.6 386.4,90.5 392.4,90.5 396.0,202.4 401.4,202.4 405.0,87.5 407.4,87.5 410.4,215.0 412.5,213.5 416.1,80.6 418.5,80.0 421.5,75.5 427.5,74.0 433.5,74.0 436.5,78.5 441.6,80.0 444.6,215.0 447.0,215.0 450.0,80.6 452.4,83.0 456.0,84.5 459.0,209.9 461.1,209.0 464.4,84.5 468.0,87.5 472.8,89.0 475.8,208.4 480.9,204.5 481.5,204.5 484.2,80.6 486.0,83.6 489.0,80.0 492.9,80.0 495.9,223.4 501.6,223.4 504.0,80.6 507.0,80.0 510.0,224.0 512.4,221.0 515.4,77.9 518.4,79.4 521.4,221.6 524.4,221.0 526.5,216.5 532.5,217.4 535.5,79.1 541.5,79.1 543.0,185.0 544.5,275.0 545.4,185.0 546.0,84.5 555.0,82.4 558.0,81.5 561.6,209.0 564.0,209.0 567.0,86.6 572.4,88.4 575.1,203.0 576.0,203.0 578.1,91.4 586.5,91.1 589.5,101.0 592.5,204.5 592.8,275.0 594.0,206.0 597.6,205.4 600.6,99.5 609.0,99.5 612.0,197.0 613.8,200.6 615.6,98.0 621.0,93.5 624.0,95.0 639.6,98.0 642.6,194.0 648.6,192.5 651.6,104.0 654.6,105.5 657.0,275.0 659.4,275.0 665.4,108.5 673.8,109.4 676.8,182.0 682.8,181.1 685.5,113.6 690.9,114.5 694.5,115.4 702.0,118.4 706.5,121.4 709.5,182.0 714.0,182.6 715.5,230.0 716.4,275.0 717.3,185.0 718.2,111.5 721.5,109.4 725.4,108.8 726.6,185.0 727.8,275.0 729.0,230.0 730.5,193.4" fill="none" stroke="#6a4c93" stroke-width="1.35" stroke-linejoin="round"/>
<polyline points="60.0,110.6 64.5,108.5 66.0,107.9 66.9,115.4 69.0,112.4 87.0,111.2 126.0,110.0 162.0,110.0 165.6,111.5 168.6,124.4 171.0,110.0 174.0,104.0 177.0,90.5 180.0,89.9 192.0,89.9 201.0,89.3 207.0,90.2 213.0,89.0 219.0,89.0 223.5,92.0 231.0,95.0 246.0,97.1 259.5,98.6 261.6,107.0 264.0,99.5 265.8,90.5 267.6,92.0 269.4,89.9 271.5,91.1 273.6,89.0 276.0,89.6 278.4,98.6 291.0,99.8 306.0,100.4 308.4,105.2 310.5,99.5 313.5,89.6 321.0,89.6 323.4,90.8 325.5,89.6 328.5,90.5 331.5,89.3 336.0,89.9 366.0,89.0 370.5,93.5 372.6,95.0 375.0,102.5 377.4,93.5 381.0,89.6 390.0,90.2 399.0,89.0 417.0,89.3 429.0,88.4 436.5,90.8 441.0,89.0 465.0,89.6 468.0,90.8 471.0,89.3 480.9,89.0 489.0,88.4 510.0,89.0 535.5,89.3 543.0,89.0 547.5,89.0 550.5,93.5 561.0,96.5 573.0,97.4 582.0,97.4 584.4,98.6 586.5,106.4 588.6,98.0 591.0,91.4 594.0,89.9 597.0,91.1 600.6,89.6 604.5,89.0 607.5,90.5 609.6,99.5 612.0,105.5 614.4,96.5 616.5,92.0 621.0,91.1 622.5,99.5 633.0,100.4 645.0,101.0 651.0,101.6 654.6,99.8 666.0,101.0 681.0,102.8 690.9,102.5 696.0,102.8 699.6,108.5 702.6,98.0 705.6,91.4 708.6,93.5 711.0,91.4 714.0,92.3 717.0,90.5 720.0,92.0 723.0,90.8 726.6,92.0 728.4,83.0 730.5,74.0 732.6,95.0 745.5,275.6 781.5,275.6 783.0,274.4 784.5,275.6 908.1,275.6" fill="none" stroke="#3f96a6" stroke-width="1.5" stroke-linejoin="round"/>
<path d="M728 56 V294" stroke="#2a2a2a" stroke-opacity="0.8" stroke-width="2"/>
<g transform="translate(211.5 40.0) scale(0.842)"><rect width="19" height="19" fill="#0b5fc9"/><rect x="1.1" y="1.1" width="16.8" height="16.8" fill="#9cc1ee"/><rect x="2.1" y="2.1" width="14.8" height="14.8" fill="#0b5fc9"/><text x="9.5" y="14" font-family="Liberation Sans" font-weight="bold" font-size="12.5" fill="#fff" text-anchor="middle">P</text></g>
<g transform="translate(269.5 40.0) scale(0.842)"><rect width="19" height="19" fill="#0b5fc9"/><rect x="1.1" y="1.1" width="16.8" height="16.8" fill="#9cc1ee"/><rect x="2.1" y="2.1" width="14.8" height="14.8" fill="#0b5fc9"/><text x="9.5" y="14" font-family="Liberation Sans" font-weight="bold" font-size="12.5" fill="#fff" text-anchor="middle">P</text></g>
<g transform="translate(351.5 40.0) scale(0.842)"><rect width="19" height="19" fill="#0b5fc9"/><rect x="1.1" y="1.1" width="16.8" height="16.8" fill="#9cc1ee"/><rect x="2.1" y="2.1" width="14.8" height="14.8" fill="#0b5fc9"/><text x="9.5" y="14" font-family="Liberation Sans" font-weight="bold" font-size="12.5" fill="#fff" text-anchor="middle">P</text></g>
<g transform="translate(614.5 40.0) scale(0.842)"><rect width="19" height="19" fill="#0b5fc9"/><rect x="1.1" y="1.1" width="16.8" height="16.8" fill="#9cc1ee"/><rect x="2.1" y="2.1" width="14.8" height="14.8" fill="#0b5fc9"/><text x="9.5" y="14" font-family="Liberation Sans" font-weight="bold" font-size="12.5" fill="#fff" text-anchor="middle">P</text></g>
<g transform="translate(719.8 40) scale(0.842)"><rect width="19" height="19" fill="#ff2258"/><rect x="1.1" y="1.1" width="16.8" height="16.8" fill="#fff"/><path d="M4.2 9 L5.2 7.7 L4.2 6.4 L5.5 5.2 L6.8 6.4 L8.6 3.5 Q8.9 3.1 9.6 3.1 H13.8 Q15 3.1 15 4.3 V14.6 Q15 16 13.6 16 H5.6 Q4.2 16 4.2 14.6Z" fill="#ff2258"/><path d="M9.4 4.1 H14 V6.6 L8.8 5.5Z" fill="#fff"/></g>
<text x="204" y="313.5" font-family="Liberation Sans" font-size="12" fill="#111" text-anchor="middle" textLength="97" lengthAdjust="spacingAndGlyphs">2019-01-04 13:30:00</text>
<text x="374.5" y="313.5" font-family="Liberation Sans" font-size="12" fill="#111" text-anchor="middle" textLength="97" lengthAdjust="spacingAndGlyphs">2019-01-04 14:00:00</text>
<text x="545.5" y="313.5" font-family="Liberation Sans" font-size="12" fill="#111" text-anchor="middle" textLength="97" lengthAdjust="spacingAndGlyphs">2019-01-04 14:30:00</text>
<text x="716" y="313.5" font-family="Liberation Sans" font-size="12" fill="#111" text-anchor="middle" textLength="97" lengthAdjust="spacingAndGlyphs">2019-01-04 15:00:00</text>
<text x="886.5" y="313.5" font-family="Liberation Sans" font-size="12" fill="#111" text-anchor="middle" textLength="97" lengthAdjust="spacingAndGlyphs">2019-01-04 15:30:00</text>
<text x="484" y="327.5" font-family="Liberation Sans" font-size="12" fill="#222" text-anchor="middle" textLength="38" lengthAdjust="spacingAndGlyphs">Время</text>
<text transform="translate(17.5 175) rotate(-90)" font-family="Liberation Sans" font-size="12" fill="#222" text-anchor="middle" textLength="56" lengthAdjust="spacingAndGlyphs">Объем, л</text>
<text transform="translate(954.5 175) rotate(90)" font-family="Liberation Sans" font-size="11" fill="#222" text-anchor="middle" textLength="78" lengthAdjust="spacingAndGlyphs">Напряжение, В</text>
<g font-family="Liberation Sans" fill="#8a8a8a" fill-opacity="0.55"><text x="568" y="290" font-size="19.5" textLength="184" lengthAdjust="spacingAndGlyphs">Активация Windows</text><text x="568" y="311" font-size="14.5" textLength="352" lengthAdjust="spacingAndGlyphs">Чтобы активировать Windows, перейдите в раздел</text><text x="568" y="330.5" font-size="14.5" textLength="95" lengthAdjust="spacingAndGlyphs">"Параметры".</text></g>
</svg></div>
<div id="foot"><svg style="position:absolute;left:-2px;top:-1px" width="1440" height="29" viewBox="0 0 1440 29">
<path d="M40.5 1 V27" stroke="#b4b4b4" stroke-width="1"/>
<path d="M75.5 1 V27" stroke="#b4b4b4" stroke-width="1"/>
<path d="M1103.5 1 V27" stroke="#b4b4b4" stroke-width="1"/>
<path d="M1277.5 1 V27" stroke="#b4b4b4" stroke-width="1"/>
<path d="M1318.5 1 V27" stroke="#b4b4b4" stroke-width="1"/>
<rect x="13.6" y="7.600000000000023" width="15.2" height="12.8" fill="none" stroke="#fff" stroke-width="1.2"/><rect x="13" y="7" width="5.2" height="14" fill="#fff"/>
<rect x="51" y="7" width="4" height="4" fill="#5e9ad8"/>
<rect x="56" y="7" width="4" height="4" fill="#5e9ad8"/>
<rect x="61" y="7" width="4" height="4" fill="#5e9ad8"/>
<rect x="51" y="12" width="4" height="4" fill="#5e9ad8"/>
<rect x="56" y="12" width="4" height="4" fill="#5e9ad8"/>
<rect x="61" y="12" width="4" height="4" fill="#5e9ad8"/>
<rect x="51" y="17" width="4" height="4" fill="#5e9ad8"/>
<rect x="56" y="17" width="4" height="4" fill="#5e9ad8"/>
<rect x="61" y="17" width="4" height="4" fill="#5e9ad8"/>
<text x="587" y="19.299999999999955" font-family="Liberation Sans" font-weight="bold" font-size="12" fill="#fff" text-anchor="middle" textLength="168" lengthAdjust="spacingAndGlyphs">© Fleet Management Solution</text>
<g transform="translate(1116 6.7000000000000455)"><rect width="17" height="14" fill="#6d9fdc"/><path d="M2 3.2 H15" stroke="#0057ad" stroke-width="1.2"/><path d="M3.5 7 H12 M3.5 10 H9" stroke="#0057ad" stroke-width="1.4"/></g>
<rect x="1137" y="6" width="18" height="14.4" rx="7.2" fill="#8b8b8b"/><text x="1146.0" y="17.799999999999955" font-family="Liberation Sans" font-size="12" fill="#e6e6e6" text-anchor="middle">0</text>
<g transform="translate(1166 7)"><rect width="17" height="12" fill="#fff"/><path d="M0.5 0.8 L8.5 7 L16.5 0.8" fill="none" stroke="#0057ad" stroke-width="1.3"/><path d="M12 8.6 H17 V6.4 L20.6 9.8 L17 13.2 V11 H12Z" fill="#fff" stroke="#0057ad" stroke-width="0.8"/><path d="M24 4 H20.5 V2.2 L17.6 5 L20.5 7.8 V6 H24Z" fill="#fff"/></g>
<rect x="1193" y="6" width="21" height="14.4" rx="7.2" fill="#e8173f"/><text x="1203.5" y="17.799999999999955" font-family="Liberation Sans" font-size="12" fill="#fff" text-anchor="middle">27</text>
<g transform="translate(1226 6.7000000000000455)"><rect width="17" height="14" fill="#6d9fdc"/><path d="M1.5 12.2 L6 7 L9 10 L11.5 8 L15.5 12.2Z" fill="#0057ad"/><circle cx="11.8" cy="4.2" r="1.6" fill="#0057ad"/></g>
<rect x="1246" y="6" width="18" height="14.4" rx="7.2" fill="#8b8b8b"/><text x="1255.0" y="17.799999999999955" font-family="Liberation Sans" font-size="12" fill="#e6e6e6" text-anchor="middle">0</text>
<g transform="translate(1288 9)"><rect width="9" height="11" fill="#6d9fdc"/><rect x="10" width="9.5" height="11" fill="#6d9fdc"/><path d="M2 3 H7 M2 5.5 H7 M2 8 H7" stroke="#0057ad" stroke-width="1"/></g>
<text x="1379" y="19.299999999999955" font-family="Liberation Sans" font-size="12" fill="#fff" text-anchor="middle" textLength="78" lengthAdjust="spacingAndGlyphs">13:51:56 (+05)</text>
</svg></div>
</div>
<div id="taskbar"><svg style="position:absolute;left:0;top:0" width="1440" height="40" viewBox="0 0 1440 40">
<g fill="#fff"><path d="M16 13.799999999999955 L22.6 12.899999999999977 V19.200000000000045 H16Z M23.6 12.700000000000045 L32 11.5 V19.200000000000045 H23.6Z M16 20.200000000000045 H22.6 V26.5 L16 25.600000000000023Z M23.6 20.200000000000045 H32 V27.899999999999977 L23.6 26.700000000000045Z"/></g>
<circle cx="74.5" cy="16.5" r="5.4" fill="none" stroke="#fff" stroke-width="1.4"/><path d="M70.6 20.600000000000023 L64.2 27.299999999999955" stroke="#fff" stroke-width="1.6"/>
<g fill="none" stroke="#fff" stroke-width="1.3"><rect x="112.5" y="15.5" width="10" height="7"/><path d="M111.5 12.200000000000045 H123.5 M111.5 26 H123.5"/><path d="M126.8 12 V15 M126.8 23 V27"/></g><rect x="125.8" y="16.600000000000023" width="2.2" height="3.6" fill="#fff"/>
<g transform="translate(161 9)"><path d="M0.8 9.6 Q1.8 0.6 10.6 0.4 Q19.4 0.6 19.8 10.4 V12.6 H6.6 Q7 16.8 12 17 Q15.6 17 18.8 15.2 V19.4 Q15.4 21.2 11.4 21 Q2.6 20.6 2.2 12.4 Q2.4 7.4 7 5.2 Q4 5.4 0.8 9.6Z M6.8 8.6 H13.8 Q13.6 4.6 10.2 4.6 Q7.2 4.8 6.8 8.6Z" fill="#0a78d4" fill-rule="evenodd"/></g>
<g transform="translate(209 11)"><path d="M0.5 1.5 Q0.5 0.5 1.5 0.5 H8 L9.8 2.4 H20.5 Q21.5 2.4 21.5 3.4 V17.5 H0.5Z" fill="#f7d774"/><path d="M0.5 1.5 Q0.5 0.5 1.5 0.5 H8 L9.8 2.4 H0.5Z" fill="#e9b93f"/><rect x="0.5" y="4.4" width="21" height="13.1" fill="#fbe39a"/><path d="M4.4 17.5 V11 Q4.4 10 5.4 10 H16.6 Q17.6 10 17.6 11 V17.5 H14.2 V13.4 H7.8 V17.5Z" fill="#35a9e8"/></g>
<g transform="translate(257 8.5)"><path d="M7 7 V4.4 Q7 0.8 11.5 0.8 Q16 0.8 16 4.4 V7" fill="none" stroke="#fff" stroke-width="1.5"/><path d="M0.5 6.6 H22.5 V21 Q22.5 22.4 21.1 22.4 H1.9 Q0.5 22.4 0.5 21Z" fill="#fff"/><rect x="6.2" y="10" width="4.6" height="4.6" fill="#f25022"/><rect x="12" y="10" width="4.6" height="4.6" fill="#7fba00"/><rect x="6.2" y="15.8" width="4.6" height="4.6" fill="#00a4ef"/><rect x="12" y="15.8" width="4.6" height="4.6" fill="#ffb900"/></g>
<g transform="translate(305.5 10)"><path d="M0.5 6.5 L12.3 0.5 L24.2 6.5 V18.5 H0.5Z" fill="#fff"/><path d="M1.5 7.8 L15 17.2 L11.2 13.4 L23.2 7.8" fill="none" stroke="#080b11" stroke-width="1.3"/></g>
<g transform="translate(356 9.5)"><path d="M7.5 0.5 L22.5 4 V15.5 L7.5 12Z" fill="#5cb8f2"/><path d="M7.5 0.5 L22.5 4 V15.5 L7.5 12Z" fill="none" stroke="#cfe9fb" stroke-width="0.8"/><path d="M12 13.4 L17 14.6 V16.6 L12 15.4Z" fill="#d0d0d0"/><path d="M1 15.6 L10.5 13.4 L19.5 16 L10 18.6Z" fill="#e8e8e8"/><path d="M1 15.6 L10 18.6 V20 L1 17Z" fill="#b8b8b8"/><path d="M10 18.6 L19.5 16 V17.4 L10 20Z" fill="#9a9a9a"/></g>
<rect x="392" y="0" width="48" height="40" fill="#3a3d42"/><rect x="392" y="38" width="48" height="2" fill="#76b9ed"/><rect x="445" y="38" width="40" height="2" fill="#76b9ed"/>
<g transform="translate(415.7 19.5)"><circle r="11" fill="#fff"/><path d="M0 0 L-9.53 -5.5 A11 11 0 0 1 9.53 -5.5Z" fill="#db4437"/><path d="M0 0 L9.53 -5.5 A11 11 0 0 1 0 11Z" fill="#ffcd40"/><path d="M0 0 L0 11 A11 11 0 0 1 -9.53 -5.5Z" fill="#0f9d58"/><path d="M-9.53 -5.5 A11 11 0 0 1 9.53 -5.5 L0 -5.5Z" fill="#db4437"/><circle r="5.2" fill="#fff"/><circle r="4.1" fill="#4285f4"/></g>
<g transform="translate(465 19.5)"><circle r="12" fill="#2ca5e0"/><path d="M-6.5 -0.2 L6.2 -5.4 Q7.2 -5.6 6.9 -4.4 L4.8 5.6 Q4.5 6.6 3.6 6 L0.2 3.5 L-1.6 5.2 Q-2.2 5.6 -2.3 4.8 L-2.6 2 L4 -3.6 L-4 1.2 L-6.6 0.4 Q-7.2 0 -6.5 -0.2Z" fill="#fff"/></g>
<rect x="463" y="23.5" width="16.5" height="10.5" rx="2" fill="#e53935"/><text x="471.3" y="32.299999999999955" font-family="Liberation Sans" font-size="9" fill="#fff" text-anchor="middle">.32</text>
<g transform="translate(514 19.5)"><ellipse rx="11" ry="11.2" fill="#e6121f"/><ellipse rx="5.2" ry="8.6" fill="#080b11"/></g>
<rect x="551" y="8" width="24" height="24" fill="#4c75a3"/><path d="M555.5 16 H558.3 Q559.6 20.600000000000023 561.2 21.200000000000045 V16 H563.9 V19 Q565.6 18.600000000000023 567 16 H569.8 Q568.8 18.600000000000023 567.2 20 Q569.2 21.399999999999977 570.4 24 H567.4 Q566.2 21.799999999999955 563.9 21.200000000000045 V24 H562 Q557 23.600000000000023 555.5 16Z" fill="#fff"/>
<g transform="translate(600 8)"><path d="M11 5.5 Q20 5 21.5 11.5 Q22 17.5 15 20.5 Q11 22 10.5 19 Q10.2 16.6 7.6 17.2 Q2 18.4 0.8 14 Q0 7.6 11 5.5Z" fill="#d9e3ec" stroke="#8aa0b6" stroke-width="0.8"/><circle cx="6" cy="11.6" r="1.7" fill="#e53935"/><circle cx="10" cy="8.8" r="1.7" fill="#fdd835"/><circle cx="14.6" cy="8.6" r="1.7" fill="#43a047"/><circle cx="5.4" cy="15" r="1.3" fill="#1e88e5"/><path d="M22.8 0.6 L13.4 17.8 L11.8 22.6 L15.2 18.8 L24 1.4Z" fill="#e59a3c"/><path d="M13.4 17.8 L11.8 22.6 L15.2 18.8Z" fill="#f6d9a8"/></g>
<g fill="none" stroke="#fff" stroke-width="1.2"><circle cx="1168.5" cy="15.5" r="3"/><path d="M1163.6 25 Q1164 19.600000000000023 1168.5 19.600000000000023 Q1172.6 19.799999999999955 1173 23"/><circle cx="1162.4" cy="19.799999999999955" r="2.3"/><path d="M1158.4 27.399999999999977 Q1158.6 23 1162.4 23 Q1166 23.200000000000045 1166.3 27.399999999999977"/></g>
<path d="M1195.5 23.200000000000045 L1201 17.399999999999977 L1206.5 23.200000000000045" fill="none" stroke="#fff" stroke-width="1.3"/>
<circle cx="1225" cy="19.5" r="8" fill="#f4d21f"/><circle cx="1225" cy="19.5" r="6.2" fill="#2fa84f"/><path d="M1221 19.5 H1229 M1225 15.5 V23.5" stroke="#f4e04a" stroke-width="2.2"/>
<g fill="none" stroke="#fff" stroke-width="1.3" transform="translate(1256 26.5)"><circle cx="-1.4" cy="-1.4" r="1.1" fill="#fff" stroke="none"/><path d="M-5 0 A5 5 0 0 1 0 -5" /><path d="M-8.6 0 A8.6 8.6 0 0 1 0 -8.6" stroke-opacity="0.85"/><path d="M-12 0 A12 12 0 0 1 0 -12" stroke-opacity="0.7"/></g>
<g transform="translate(1265 12.5)" fill="none" stroke="#fff" stroke-width="1.2"><path d="M0.6 4.8 H3.6 L7.4 1 V13 L3.6 9.2 H0.6Z"/><path d="M9.6 4.4 Q11 7 9.6 9.6"/><path d="M11.8 2.6 Q14.2 7 11.8 11.4" stroke-opacity="0.8"/><path d="M14 0.8 Q17.2 7 14 13.2" stroke-opacity="0.55"/></g>
<text x="1303" y="23.799999999999955" font-family="Liberation Sans" font-size="12" fill="#fff" text-anchor="middle" textLength="21.5" lengthAdjust="spacingAndGlyphs">РУС</text>
<text x="1353.5" y="15.299999999999955" font-family="Liberation Sans" font-size="12" fill="#fff" text-anchor="middle" textLength="25.5" lengthAdjust="spacingAndGlyphs">13:51</text>
<text x="1354.3" y="33.299999999999955" font-family="Liberation Sans" font-size="12" fill="#fff" text-anchor="middle" textLength="54" lengthAdjust="spacingAndGlyphs">14.01.2019</text>
<path d="M1400 13.299999999999955 H1414.5 V24.600000000000023 H1409.6 L1407.2 27.399999999999977 L1404.8 24.600000000000023 H1400Z" fill="none" stroke="#fff" stroke-width="1.2"/>
<path d="M1435.5 0 V40" stroke="#5a5d62" stroke-width="1"/>
</svg></div>
</body></html>
